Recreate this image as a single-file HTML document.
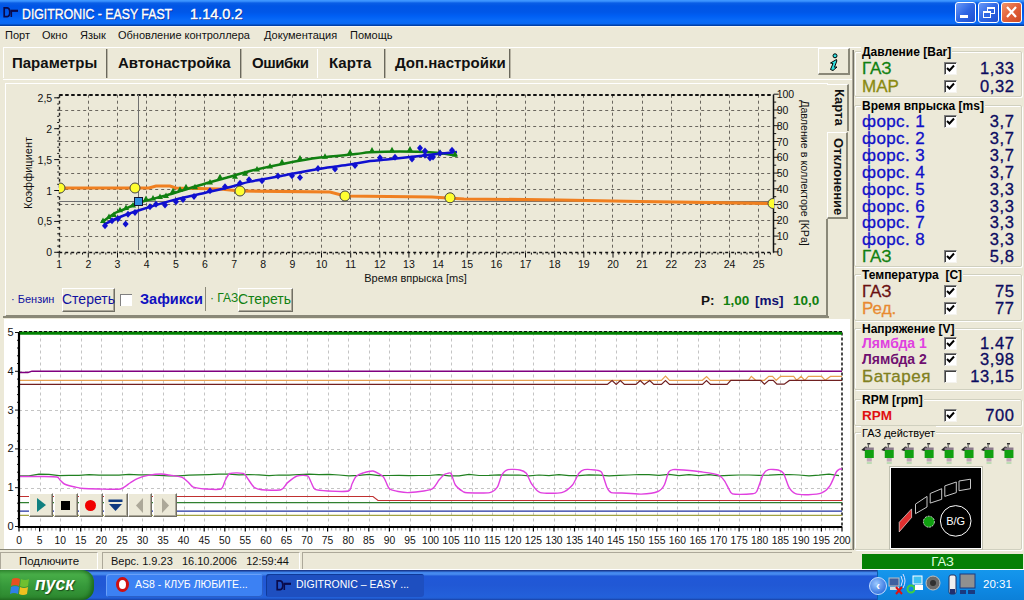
<!DOCTYPE html>
<html><head><meta charset="utf-8">
<style>
* { margin:0; padding:0; box-sizing:border-box; }
html,body { width:1024px; height:600px; overflow:hidden; background:#ece9d8; font-family:"Liberation Sans", sans-serif; position:relative; }
.a { position:absolute; white-space:nowrap; }
</style></head><body>
<div class="a" style="left:0;top:0;width:1024px;height:26px;background:linear-gradient(#3d95ff 0px,#3d95ff 1px,#0a5ee6 3px,#0055e5 6px,#0057e8 12px,#005ff4 16px,#0a6cf8 21px,#0a68f2 24px,#0040a8 25px,#0040a8 26px);"></div>
<div class="a" style="left:0;top:26px;width:1024px;height:1px;background:#f8f8f4"></div>
<svg class="a" style="left:0;top:2px" width="22" height="20"><path d="M4.2,5.8 H7.2 Q9.8,6.2 9.8,10.2 Q9.8,14.2 7.2,14.6 H4.2 Z" fill="none" stroke="#0a0a4a" stroke-width="1.7"/><path d="M11.3,8.5 V15" stroke="#0a0a4a" stroke-width="1.6"/><path d="M10.5,8.8 H18" stroke="#0a0a4a" stroke-width="2.2"/></svg>
<div class="a" style="left:22px;top:5px;font-size:15px;color:#fff;transform:scaleX(0.82);transform-origin:0 0;-webkit-text-stroke:0.4px #fff;text-shadow:1px 1px 0 #0a2a90">DIGITRONIC - EASY FAST</div>
<div class="a" style="left:190px;top:5px;font-size:15px;color:#fff;transform:scaleX(0.97);transform-origin:0 0;-webkit-text-stroke:0.4px #fff;text-shadow:1px 1px 0 #0a2a90">1.14.0.2</div>
<div class="a" style="left:955px;top:2px;width:21px;height:21px;border:1px solid #fff;border-radius:3px;background:linear-gradient(135deg,#6a9af8,#2e66e4 50%,#1e4ed0)"></div>
<div class="a" style="left:960px;top:15px;width:8px;height:3px;background:#fff"></div>
<div class="a" style="left:978px;top:2px;width:21px;height:21px;border:1px solid #fff;border-radius:3px;background:linear-gradient(135deg,#6a9af8,#2e66e4 50%,#1e4ed0)"></div>
<div class="a" style="left:987px;top:7px;width:8px;height:7px;border:1px solid #fff;border-top-width:2px"></div>
<div class="a" style="left:983px;top:11px;width:8px;height:7px;border:1px solid #fff;border-top-width:2px;background:#2e66e4"></div>
<div class="a" style="left:1001px;top:2px;width:21px;height:21px;border:1px solid #fff;border-radius:3px;background:linear-gradient(135deg,#f0946a,#e2603a 50%,#cc4a24)"></div>
<svg class="a" style="left:1001px;top:2px" width="21" height="21"><path d="M6,5 L15,15 M15,5 L6,15" stroke="#fff" stroke-width="2.2"/></svg>
<div class="a" style="left:0;top:25px;width:1024px;height:20px;font-size:11px;color:#111">
<span class="a" style="left:5px;top:4px">Порт</span>
<span class="a" style="left:42px;top:4px">Окно</span>
<span class="a" style="left:80px;top:4px">Язык</span>
<span class="a" style="left:118px;top:4px">Обновление контроллера</span>
<span class="a" style="left:264px;top:4px">Документация</span>
<span class="a" style="left:350px;top:4px">Помощь</span>
</div>
<div class="a" style="left:3px;top:47px;width:1021px;height:1px;background:#fff"></div>
<div class="a" style="left:3px;top:48px;width:1px;height:30px;background:#fff"></div>
<div class="a" style="left:5px;top:48px;width:505px;height:30px;font-size:15px;font-weight:bold;color:#111">
<span class="a" style="left:7px;top:6px">Параметры</span>
<span class="a" style="left:113px;top:6px">Автонастройка</span>
<span class="a" style="left:247px;top:6px;letter-spacing:-0.5px">Ошибки</span>
<span class="a" style="left:324px;top:6px">Карта</span>
<span class="a" style="left:390px;top:6px">Доп.настройки</span>
</div>
<div class="a" style="left:106px;top:49px;width:1px;height:29px;background:#6a685c"></div><div class="a" style="left:107px;top:49px;width:1px;height:29px;background:#b8b4a4"></div>
<div class="a" style="left:240px;top:49px;width:1px;height:29px;background:#6a685c"></div><div class="a" style="left:241px;top:49px;width:1px;height:29px;background:#b8b4a4"></div>
<div class="a" style="left:317px;top:49px;width:1px;height:29px;background:#fff"></div>
<div class="a" style="left:384px;top:49px;width:1px;height:29px;background:#6a685c"></div><div class="a" style="left:385px;top:49px;width:1px;height:29px;background:#b8b4a4"></div>
<div class="a" style="left:509px;top:49px;width:1px;height:29px;background:#6a685c"></div><div class="a" style="left:510px;top:49px;width:1px;height:29px;background:#b8b4a4"></div>
<div class="a" style="left:818px;top:48px;width:32px;height:27px;border-top:1px solid #fff;border-left:1px solid #fff;border-right:2px solid #8a8878;border-bottom:2px solid #8a8878"></div>
<svg class="a" style="left:810px;top:44px" width="46" height="36"><circle cx="25" cy="11.8" r="2" fill="#30e0e0" stroke="#000" stroke-width="1"/><path d="M26.5,15.5 L20.5,19 L23,19.5 L20.5,25.5 L23,26.5 L27,23 L24.5,23.2 L26.8,17 Z" fill="#30e0e0" stroke="#000" stroke-width="1" stroke-linejoin="round"/></svg>
<div class="a" style="left:3px;top:79px;width:850px;height:1px;background:#fff"></div>
<div class="a" style="left:5px;top:83px;width:823px;height:234px;border-left:1px solid #fff;border-top:1px solid #fff;border-bottom:2px solid #8a8878;"></div>
<div class="a" style="left:826px;top:219px;width:2px;height:98px;background:#8a8878"></div>
<svg width="1024" height="600" style="position:absolute;left:0;top:0" font-family="Liberation Sans">
<line x1="59.2" y1="110.5" x2="773.7" y2="110.5" stroke="#6a665e" stroke-width="1" stroke-dasharray="3,3"/>
<line x1="59.2" y1="126.5" x2="773.7" y2="126.5" stroke="#6a665e" stroke-width="1" stroke-dasharray="3,3"/>
<line x1="59.2" y1="141.5" x2="773.7" y2="141.5" stroke="#6a665e" stroke-width="1" stroke-dasharray="3,3"/>
<line x1="59.2" y1="157.5" x2="773.7" y2="157.5" stroke="#6a665e" stroke-width="1" stroke-dasharray="3,3"/>
<line x1="59.2" y1="173.5" x2="773.7" y2="173.5" stroke="#6a665e" stroke-width="1" stroke-dasharray="3,3"/>
<line x1="59.2" y1="189.5" x2="773.7" y2="189.5" stroke="#6a665e" stroke-width="1" stroke-dasharray="3,3"/>
<line x1="59.2" y1="204.5" x2="773.7" y2="204.5" stroke="#6a665e" stroke-width="1" stroke-dasharray="3,3"/>
<line x1="59.2" y1="220.5" x2="773.7" y2="220.5" stroke="#6a665e" stroke-width="1" stroke-dasharray="3,3"/>
<line x1="59.2" y1="236.5" x2="773.7" y2="236.5" stroke="#6a665e" stroke-width="1" stroke-dasharray="3,3"/>
<line x1="88.5" y1="94.7" x2="88.5" y2="252.6" stroke="#6a665e" stroke-width="1" stroke-dasharray="3,3"/>
<line x1="117.5" y1="94.7" x2="117.5" y2="252.6" stroke="#6a665e" stroke-width="1" stroke-dasharray="3,3"/>
<line x1="146.5" y1="94.7" x2="146.5" y2="252.6" stroke="#6a665e" stroke-width="1" stroke-dasharray="3,3"/>
<line x1="175.5" y1="94.7" x2="175.5" y2="252.6" stroke="#6a665e" stroke-width="1" stroke-dasharray="3,3"/>
<line x1="204.5" y1="94.7" x2="204.5" y2="252.6" stroke="#6a665e" stroke-width="1" stroke-dasharray="3,3"/>
<line x1="234.5" y1="94.7" x2="234.5" y2="252.6" stroke="#6a665e" stroke-width="1" stroke-dasharray="3,3"/>
<line x1="263.5" y1="94.7" x2="263.5" y2="252.6" stroke="#6a665e" stroke-width="1" stroke-dasharray="3,3"/>
<line x1="292.5" y1="94.7" x2="292.5" y2="252.6" stroke="#6a665e" stroke-width="1" stroke-dasharray="3,3"/>
<line x1="321.5" y1="94.7" x2="321.5" y2="252.6" stroke="#6a665e" stroke-width="1" stroke-dasharray="3,3"/>
<line x1="350.5" y1="94.7" x2="350.5" y2="252.6" stroke="#6a665e" stroke-width="1" stroke-dasharray="3,3"/>
<line x1="379.5" y1="94.7" x2="379.5" y2="252.6" stroke="#6a665e" stroke-width="1" stroke-dasharray="3,3"/>
<line x1="408.5" y1="94.7" x2="408.5" y2="252.6" stroke="#6a665e" stroke-width="1" stroke-dasharray="3,3"/>
<line x1="438.5" y1="94.7" x2="438.5" y2="252.6" stroke="#6a665e" stroke-width="1" stroke-dasharray="3,3"/>
<line x1="467.5" y1="94.7" x2="467.5" y2="252.6" stroke="#6a665e" stroke-width="1" stroke-dasharray="3,3"/>
<line x1="496.5" y1="94.7" x2="496.5" y2="252.6" stroke="#6a665e" stroke-width="1" stroke-dasharray="3,3"/>
<line x1="525.5" y1="94.7" x2="525.5" y2="252.6" stroke="#6a665e" stroke-width="1" stroke-dasharray="3,3"/>
<line x1="554.5" y1="94.7" x2="554.5" y2="252.6" stroke="#6a665e" stroke-width="1" stroke-dasharray="3,3"/>
<line x1="583.5" y1="94.7" x2="583.5" y2="252.6" stroke="#6a665e" stroke-width="1" stroke-dasharray="3,3"/>
<line x1="612.5" y1="94.7" x2="612.5" y2="252.6" stroke="#6a665e" stroke-width="1" stroke-dasharray="3,3"/>
<line x1="642.5" y1="94.7" x2="642.5" y2="252.6" stroke="#6a665e" stroke-width="1" stroke-dasharray="3,3"/>
<line x1="671.5" y1="94.7" x2="671.5" y2="252.6" stroke="#6a665e" stroke-width="1" stroke-dasharray="3,3"/>
<line x1="700.5" y1="94.7" x2="700.5" y2="252.6" stroke="#6a665e" stroke-width="1" stroke-dasharray="3,3"/>
<line x1="729.5" y1="94.7" x2="729.5" y2="252.6" stroke="#6a665e" stroke-width="1" stroke-dasharray="3,3"/>
<line x1="758.5" y1="94.7" x2="758.5" y2="252.6" stroke="#6a665e" stroke-width="1" stroke-dasharray="3,3"/>
<line x1="59.2" y1="95" x2="773.7" y2="95" stroke="#111" stroke-width="1.8" stroke-dasharray="3.5,2.5"/>
<line x1="59.5" y1="94.7" x2="59.5" y2="252.6" stroke="#222" stroke-width="1.4" stroke-dasharray="3,3"/>
<line x1="773.5" y1="94.7" x2="773.5" y2="252.6" stroke="#111" stroke-width="1.5"/>
<line x1="59.2" y1="252.5" x2="773.7" y2="252.5" stroke="#111" stroke-width="1.5" stroke-dasharray="3,3"/>
<line x1="54.2" y1="252.3" x2="59.2" y2="252.3" stroke="#111"/>
<text x="52.2" y="256.3" text-anchor="end" font-size="10.5" fill="#111">0</text>
<line x1="54.2" y1="221.4" x2="59.2" y2="221.4" stroke="#111"/>
<text x="52.2" y="225.4" text-anchor="end" font-size="10.5" fill="#111">0,5</text>
<line x1="54.2" y1="190.5" x2="59.2" y2="190.5" stroke="#111"/>
<text x="52.2" y="194.5" text-anchor="end" font-size="10.5" fill="#111">1</text>
<line x1="54.2" y1="159.6" x2="59.2" y2="159.6" stroke="#111"/>
<text x="52.2" y="163.6" text-anchor="end" font-size="10.5" fill="#111">1,5</text>
<line x1="54.2" y1="128.7" x2="59.2" y2="128.7" stroke="#111"/>
<text x="52.2" y="132.7" text-anchor="end" font-size="10.5" fill="#111">2</text>
<line x1="54.2" y1="97.8" x2="59.2" y2="97.8" stroke="#111"/>
<text x="52.2" y="101.8" text-anchor="end" font-size="10.5" fill="#111">2,5</text>
<line x1="57.2" y1="252.3" x2="59.2" y2="252.3" stroke="#111"/>
<line x1="57.2" y1="246.1" x2="59.2" y2="246.1" stroke="#111"/>
<line x1="57.2" y1="239.9" x2="59.2" y2="239.9" stroke="#111"/>
<line x1="57.2" y1="233.8" x2="59.2" y2="233.8" stroke="#111"/>
<line x1="57.2" y1="227.6" x2="59.2" y2="227.6" stroke="#111"/>
<line x1="57.2" y1="221.4" x2="59.2" y2="221.4" stroke="#111"/>
<line x1="57.2" y1="215.2" x2="59.2" y2="215.2" stroke="#111"/>
<line x1="57.2" y1="209.0" x2="59.2" y2="209.0" stroke="#111"/>
<line x1="57.2" y1="202.9" x2="59.2" y2="202.9" stroke="#111"/>
<line x1="57.2" y1="196.7" x2="59.2" y2="196.7" stroke="#111"/>
<line x1="57.2" y1="190.5" x2="59.2" y2="190.5" stroke="#111"/>
<line x1="57.2" y1="184.3" x2="59.2" y2="184.3" stroke="#111"/>
<line x1="57.2" y1="178.1" x2="59.2" y2="178.1" stroke="#111"/>
<line x1="57.2" y1="172.0" x2="59.2" y2="172.0" stroke="#111"/>
<line x1="57.2" y1="165.8" x2="59.2" y2="165.8" stroke="#111"/>
<line x1="57.2" y1="159.6" x2="59.2" y2="159.6" stroke="#111"/>
<line x1="57.2" y1="153.4" x2="59.2" y2="153.4" stroke="#111"/>
<line x1="57.2" y1="147.2" x2="59.2" y2="147.2" stroke="#111"/>
<line x1="57.2" y1="141.1" x2="59.2" y2="141.1" stroke="#111"/>
<line x1="57.2" y1="134.9" x2="59.2" y2="134.9" stroke="#111"/>
<line x1="57.2" y1="128.7" x2="59.2" y2="128.7" stroke="#111"/>
<line x1="57.2" y1="122.5" x2="59.2" y2="122.5" stroke="#111"/>
<line x1="57.2" y1="116.3" x2="59.2" y2="116.3" stroke="#111"/>
<line x1="57.2" y1="110.2" x2="59.2" y2="110.2" stroke="#111"/>
<line x1="57.2" y1="104.0" x2="59.2" y2="104.0" stroke="#111"/>
<line x1="57.2" y1="97.8" x2="59.2" y2="97.8" stroke="#111"/>
<line x1="59.2" y1="252.6" x2="59.2" y2="257.6" stroke="#111"/>
<text x="59.2" y="267.6" text-anchor="middle" font-size="10.5" fill="#111">1</text>
<line x1="65.0" y1="252.6" x2="65.0" y2="254.6" stroke="#111"/>
<line x1="70.9" y1="252.6" x2="70.9" y2="254.6" stroke="#111"/>
<line x1="76.7" y1="252.6" x2="76.7" y2="254.6" stroke="#111"/>
<line x1="82.5" y1="252.6" x2="82.5" y2="254.6" stroke="#111"/>
<line x1="88.3" y1="252.6" x2="88.3" y2="257.6" stroke="#111"/>
<text x="88.3" y="267.6" text-anchor="middle" font-size="10.5" fill="#111">2</text>
<line x1="94.2" y1="252.6" x2="94.2" y2="254.6" stroke="#111"/>
<line x1="100.0" y1="252.6" x2="100.0" y2="254.6" stroke="#111"/>
<line x1="105.8" y1="252.6" x2="105.8" y2="254.6" stroke="#111"/>
<line x1="111.7" y1="252.6" x2="111.7" y2="254.6" stroke="#111"/>
<line x1="117.5" y1="252.6" x2="117.5" y2="257.6" stroke="#111"/>
<text x="117.5" y="267.6" text-anchor="middle" font-size="10.5" fill="#111">3</text>
<line x1="123.3" y1="252.6" x2="123.3" y2="254.6" stroke="#111"/>
<line x1="129.2" y1="252.6" x2="129.2" y2="254.6" stroke="#111"/>
<line x1="135.0" y1="252.6" x2="135.0" y2="254.6" stroke="#111"/>
<line x1="140.8" y1="252.6" x2="140.8" y2="254.6" stroke="#111"/>
<line x1="146.6" y1="252.6" x2="146.6" y2="257.6" stroke="#111"/>
<text x="146.6" y="267.6" text-anchor="middle" font-size="10.5" fill="#111">4</text>
<line x1="152.5" y1="252.6" x2="152.5" y2="254.6" stroke="#111"/>
<line x1="158.3" y1="252.6" x2="158.3" y2="254.6" stroke="#111"/>
<line x1="164.1" y1="252.6" x2="164.1" y2="254.6" stroke="#111"/>
<line x1="170.0" y1="252.6" x2="170.0" y2="254.6" stroke="#111"/>
<line x1="175.8" y1="252.6" x2="175.8" y2="257.6" stroke="#111"/>
<text x="175.8" y="267.6" text-anchor="middle" font-size="10.5" fill="#111">5</text>
<line x1="181.6" y1="252.6" x2="181.6" y2="254.6" stroke="#111"/>
<line x1="187.4" y1="252.6" x2="187.4" y2="254.6" stroke="#111"/>
<line x1="193.3" y1="252.6" x2="193.3" y2="254.6" stroke="#111"/>
<line x1="199.1" y1="252.6" x2="199.1" y2="254.6" stroke="#111"/>
<line x1="204.9" y1="252.6" x2="204.9" y2="257.6" stroke="#111"/>
<text x="204.9" y="267.6" text-anchor="middle" font-size="10.5" fill="#111">6</text>
<line x1="210.8" y1="252.6" x2="210.8" y2="254.6" stroke="#111"/>
<line x1="216.6" y1="252.6" x2="216.6" y2="254.6" stroke="#111"/>
<line x1="222.4" y1="252.6" x2="222.4" y2="254.6" stroke="#111"/>
<line x1="228.2" y1="252.6" x2="228.2" y2="254.6" stroke="#111"/>
<line x1="234.1" y1="252.6" x2="234.1" y2="257.6" stroke="#111"/>
<text x="234.1" y="267.6" text-anchor="middle" font-size="10.5" fill="#111">7</text>
<line x1="239.9" y1="252.6" x2="239.9" y2="254.6" stroke="#111"/>
<line x1="245.7" y1="252.6" x2="245.7" y2="254.6" stroke="#111"/>
<line x1="251.6" y1="252.6" x2="251.6" y2="254.6" stroke="#111"/>
<line x1="257.4" y1="252.6" x2="257.4" y2="254.6" stroke="#111"/>
<line x1="263.2" y1="252.6" x2="263.2" y2="257.6" stroke="#111"/>
<text x="263.2" y="267.6" text-anchor="middle" font-size="10.5" fill="#111">8</text>
<line x1="269.0" y1="252.6" x2="269.0" y2="254.6" stroke="#111"/>
<line x1="274.9" y1="252.6" x2="274.9" y2="254.6" stroke="#111"/>
<line x1="280.7" y1="252.6" x2="280.7" y2="254.6" stroke="#111"/>
<line x1="286.5" y1="252.6" x2="286.5" y2="254.6" stroke="#111"/>
<line x1="292.4" y1="252.6" x2="292.4" y2="257.6" stroke="#111"/>
<text x="292.4" y="267.6" text-anchor="middle" font-size="10.5" fill="#111">9</text>
<line x1="298.2" y1="252.6" x2="298.2" y2="254.6" stroke="#111"/>
<line x1="304.0" y1="252.6" x2="304.0" y2="254.6" stroke="#111"/>
<line x1="309.9" y1="252.6" x2="309.9" y2="254.6" stroke="#111"/>
<line x1="315.7" y1="252.6" x2="315.7" y2="254.6" stroke="#111"/>
<line x1="321.5" y1="252.6" x2="321.5" y2="257.6" stroke="#111"/>
<text x="321.5" y="267.6" text-anchor="middle" font-size="10.5" fill="#111">10</text>
<line x1="327.3" y1="252.6" x2="327.3" y2="254.6" stroke="#111"/>
<line x1="333.2" y1="252.6" x2="333.2" y2="254.6" stroke="#111"/>
<line x1="339.0" y1="252.6" x2="339.0" y2="254.6" stroke="#111"/>
<line x1="344.8" y1="252.6" x2="344.8" y2="254.6" stroke="#111"/>
<line x1="350.7" y1="252.6" x2="350.7" y2="257.6" stroke="#111"/>
<text x="350.7" y="267.6" text-anchor="middle" font-size="10.5" fill="#111">11</text>
<line x1="356.5" y1="252.6" x2="356.5" y2="254.6" stroke="#111"/>
<line x1="362.3" y1="252.6" x2="362.3" y2="254.6" stroke="#111"/>
<line x1="368.1" y1="252.6" x2="368.1" y2="254.6" stroke="#111"/>
<line x1="374.0" y1="252.6" x2="374.0" y2="254.6" stroke="#111"/>
<line x1="379.8" y1="252.6" x2="379.8" y2="257.6" stroke="#111"/>
<text x="379.8" y="267.6" text-anchor="middle" font-size="10.5" fill="#111">12</text>
<line x1="385.6" y1="252.6" x2="385.6" y2="254.6" stroke="#111"/>
<line x1="391.5" y1="252.6" x2="391.5" y2="254.6" stroke="#111"/>
<line x1="397.3" y1="252.6" x2="397.3" y2="254.6" stroke="#111"/>
<line x1="403.1" y1="252.6" x2="403.1" y2="254.6" stroke="#111"/>
<line x1="408.9" y1="252.6" x2="408.9" y2="257.6" stroke="#111"/>
<text x="408.9" y="267.6" text-anchor="middle" font-size="10.5" fill="#111">13</text>
<line x1="414.8" y1="252.6" x2="414.8" y2="254.6" stroke="#111"/>
<line x1="420.6" y1="252.6" x2="420.6" y2="254.6" stroke="#111"/>
<line x1="426.4" y1="252.6" x2="426.4" y2="254.6" stroke="#111"/>
<line x1="432.3" y1="252.6" x2="432.3" y2="254.6" stroke="#111"/>
<line x1="438.1" y1="252.6" x2="438.1" y2="257.6" stroke="#111"/>
<text x="438.1" y="267.6" text-anchor="middle" font-size="10.5" fill="#111">14</text>
<line x1="443.9" y1="252.6" x2="443.9" y2="254.6" stroke="#111"/>
<line x1="449.8" y1="252.6" x2="449.8" y2="254.6" stroke="#111"/>
<line x1="455.6" y1="252.6" x2="455.6" y2="254.6" stroke="#111"/>
<line x1="461.4" y1="252.6" x2="461.4" y2="254.6" stroke="#111"/>
<line x1="467.2" y1="252.6" x2="467.2" y2="257.6" stroke="#111"/>
<text x="467.2" y="267.6" text-anchor="middle" font-size="10.5" fill="#111">15</text>
<line x1="473.1" y1="252.6" x2="473.1" y2="254.6" stroke="#111"/>
<line x1="478.9" y1="252.6" x2="478.9" y2="254.6" stroke="#111"/>
<line x1="484.7" y1="252.6" x2="484.7" y2="254.6" stroke="#111"/>
<line x1="490.6" y1="252.6" x2="490.6" y2="254.6" stroke="#111"/>
<line x1="496.4" y1="252.6" x2="496.4" y2="257.6" stroke="#111"/>
<text x="496.4" y="267.6" text-anchor="middle" font-size="10.5" fill="#111">16</text>
<line x1="502.2" y1="252.6" x2="502.2" y2="254.6" stroke="#111"/>
<line x1="508.0" y1="252.6" x2="508.0" y2="254.6" stroke="#111"/>
<line x1="513.9" y1="252.6" x2="513.9" y2="254.6" stroke="#111"/>
<line x1="519.7" y1="252.6" x2="519.7" y2="254.6" stroke="#111"/>
<line x1="525.5" y1="252.6" x2="525.5" y2="257.6" stroke="#111"/>
<text x="525.5" y="267.6" text-anchor="middle" font-size="10.5" fill="#111">17</text>
<line x1="531.4" y1="252.6" x2="531.4" y2="254.6" stroke="#111"/>
<line x1="537.2" y1="252.6" x2="537.2" y2="254.6" stroke="#111"/>
<line x1="543.0" y1="252.6" x2="543.0" y2="254.6" stroke="#111"/>
<line x1="548.9" y1="252.6" x2="548.9" y2="254.6" stroke="#111"/>
<line x1="554.7" y1="252.6" x2="554.7" y2="257.6" stroke="#111"/>
<text x="554.7" y="267.6" text-anchor="middle" font-size="10.5" fill="#111">18</text>
<line x1="560.5" y1="252.6" x2="560.5" y2="254.6" stroke="#111"/>
<line x1="566.3" y1="252.6" x2="566.3" y2="254.6" stroke="#111"/>
<line x1="572.2" y1="252.6" x2="572.2" y2="254.6" stroke="#111"/>
<line x1="578.0" y1="252.6" x2="578.0" y2="254.6" stroke="#111"/>
<line x1="583.8" y1="252.6" x2="583.8" y2="257.6" stroke="#111"/>
<text x="583.8" y="267.6" text-anchor="middle" font-size="10.5" fill="#111">19</text>
<line x1="589.7" y1="252.6" x2="589.7" y2="254.6" stroke="#111"/>
<line x1="595.5" y1="252.6" x2="595.5" y2="254.6" stroke="#111"/>
<line x1="601.3" y1="252.6" x2="601.3" y2="254.6" stroke="#111"/>
<line x1="607.1" y1="252.6" x2="607.1" y2="254.6" stroke="#111"/>
<line x1="613.0" y1="252.6" x2="613.0" y2="257.6" stroke="#111"/>
<text x="613.0" y="267.6" text-anchor="middle" font-size="10.5" fill="#111">20</text>
<line x1="618.8" y1="252.6" x2="618.8" y2="254.6" stroke="#111"/>
<line x1="624.6" y1="252.6" x2="624.6" y2="254.6" stroke="#111"/>
<line x1="630.5" y1="252.6" x2="630.5" y2="254.6" stroke="#111"/>
<line x1="636.3" y1="252.6" x2="636.3" y2="254.6" stroke="#111"/>
<line x1="642.1" y1="252.6" x2="642.1" y2="257.6" stroke="#111"/>
<text x="642.1" y="267.6" text-anchor="middle" font-size="10.5" fill="#111">21</text>
<line x1="647.9" y1="252.6" x2="647.9" y2="254.6" stroke="#111"/>
<line x1="653.8" y1="252.6" x2="653.8" y2="254.6" stroke="#111"/>
<line x1="659.6" y1="252.6" x2="659.6" y2="254.6" stroke="#111"/>
<line x1="665.4" y1="252.6" x2="665.4" y2="254.6" stroke="#111"/>
<line x1="671.3" y1="252.6" x2="671.3" y2="257.6" stroke="#111"/>
<text x="671.3" y="267.6" text-anchor="middle" font-size="10.5" fill="#111">22</text>
<line x1="677.1" y1="252.6" x2="677.1" y2="254.6" stroke="#111"/>
<line x1="682.9" y1="252.6" x2="682.9" y2="254.6" stroke="#111"/>
<line x1="688.8" y1="252.6" x2="688.8" y2="254.6" stroke="#111"/>
<line x1="694.6" y1="252.6" x2="694.6" y2="254.6" stroke="#111"/>
<line x1="700.4" y1="252.6" x2="700.4" y2="257.6" stroke="#111"/>
<text x="700.4" y="267.6" text-anchor="middle" font-size="10.5" fill="#111">23</text>
<line x1="706.2" y1="252.6" x2="706.2" y2="254.6" stroke="#111"/>
<line x1="712.1" y1="252.6" x2="712.1" y2="254.6" stroke="#111"/>
<line x1="717.9" y1="252.6" x2="717.9" y2="254.6" stroke="#111"/>
<line x1="723.7" y1="252.6" x2="723.7" y2="254.6" stroke="#111"/>
<line x1="729.6" y1="252.6" x2="729.6" y2="257.6" stroke="#111"/>
<text x="729.6" y="267.6" text-anchor="middle" font-size="10.5" fill="#111">24</text>
<line x1="735.4" y1="252.6" x2="735.4" y2="254.6" stroke="#111"/>
<line x1="741.2" y1="252.6" x2="741.2" y2="254.6" stroke="#111"/>
<line x1="747.0" y1="252.6" x2="747.0" y2="254.6" stroke="#111"/>
<line x1="752.9" y1="252.6" x2="752.9" y2="254.6" stroke="#111"/>
<line x1="758.7" y1="252.6" x2="758.7" y2="257.6" stroke="#111"/>
<text x="758.7" y="267.6" text-anchor="middle" font-size="10.5" fill="#111">25</text>
<line x1="764.5" y1="252.6" x2="764.5" y2="254.6" stroke="#111"/>
<line x1="770.4" y1="252.6" x2="770.4" y2="254.6" stroke="#111"/>
<line x1="773.7" y1="251.9" x2="778.7" y2="251.9" stroke="#111"/>
<text x="776.7" y="255.9" font-size="10.5" fill="#111">0</text>
<line x1="773.7" y1="244.0" x2="776.2" y2="244.0" stroke="#111"/>
<line x1="773.7" y1="236.1" x2="778.7" y2="236.1" stroke="#111"/>
<text x="776.7" y="240.1" font-size="10.5" fill="#111">10</text>
<line x1="773.7" y1="228.2" x2="776.2" y2="228.2" stroke="#111"/>
<line x1="773.7" y1="220.4" x2="778.7" y2="220.4" stroke="#111"/>
<text x="776.7" y="224.4" font-size="10.5" fill="#111">20</text>
<line x1="773.7" y1="212.5" x2="776.2" y2="212.5" stroke="#111"/>
<line x1="773.7" y1="204.6" x2="778.7" y2="204.6" stroke="#111"/>
<text x="776.7" y="208.6" font-size="10.5" fill="#111">30</text>
<line x1="773.7" y1="196.7" x2="776.2" y2="196.7" stroke="#111"/>
<line x1="773.7" y1="188.8" x2="778.7" y2="188.8" stroke="#111"/>
<text x="776.7" y="192.8" font-size="10.5" fill="#111">40</text>
<line x1="773.7" y1="180.9" x2="776.2" y2="180.9" stroke="#111"/>
<line x1="773.7" y1="173.1" x2="778.7" y2="173.1" stroke="#111"/>
<text x="776.7" y="177.1" font-size="10.5" fill="#111">50</text>
<line x1="773.7" y1="165.2" x2="776.2" y2="165.2" stroke="#111"/>
<line x1="773.7" y1="157.3" x2="778.7" y2="157.3" stroke="#111"/>
<text x="776.7" y="161.3" font-size="10.5" fill="#111">60</text>
<line x1="773.7" y1="149.4" x2="776.2" y2="149.4" stroke="#111"/>
<line x1="773.7" y1="141.5" x2="778.7" y2="141.5" stroke="#111"/>
<text x="776.7" y="145.5" font-size="10.5" fill="#111">70</text>
<line x1="773.7" y1="133.6" x2="776.2" y2="133.6" stroke="#111"/>
<line x1="773.7" y1="125.7" x2="778.7" y2="125.7" stroke="#111"/>
<text x="776.7" y="129.7" font-size="10.5" fill="#111">80</text>
<line x1="773.7" y1="117.9" x2="776.2" y2="117.9" stroke="#111"/>
<line x1="773.7" y1="110.0" x2="778.7" y2="110.0" stroke="#111"/>
<text x="776.7" y="114.0" font-size="10.5" fill="#111">90</text>
<line x1="773.7" y1="102.1" x2="776.2" y2="102.1" stroke="#111"/>
<line x1="773.7" y1="94.2" x2="778.7" y2="94.2" stroke="#111"/>
<text x="776.7" y="98.2" font-size="10.5" fill="#111">100</text>
<text x="415.5" y="282" text-anchor="middle" font-size="11" fill="#111">Время впрыска [ms]</text>
<text transform="translate(32,173) rotate(-90)" text-anchor="middle" font-size="11" fill="#111">Коэффициент</text>
<text transform="translate(800.5,173) rotate(90)" text-anchor="middle" font-size="10.7" fill="#111">Давление в коллекторе [KPa]</text>
<line x1="138.5" y1="94.7" x2="138.5" y2="250" stroke="#707070" stroke-width="1"/>
<line x1="59.2" y1="201.5" x2="773.7" y2="201.5" stroke="#707070" stroke-width="1"/>
<polyline fill="none" stroke="#f08020" stroke-width="3.2"  points="59.0,188.0 149.0,188.0 156.0,186.0 170.0,186.0 176.0,188.0 220.0,189.0 240.0,191.0 330.0,192.0 345.0,196.0 432.0,197.0 464.0,199.0 560.0,200.0 640.0,201.5 772.0,203.5"/>
<path fill="none" stroke="#108010" stroke-width="2.5" d="M103.0,221.6 C105.0,220.2 111.3,215.1 115.0,213.0 C118.7,210.9 120.8,210.8 125.0,209.0 C129.2,207.2 132.7,204.9 140.0,202.5 C147.3,200.1 159.2,197.3 169.0,194.5 C178.8,191.7 188.8,188.4 198.6,185.5 C208.4,182.6 219.4,179.7 228.0,177.3 C236.6,174.9 240.5,173.3 250.0,171.0 C259.5,168.7 273.3,165.6 285.0,163.4 C296.7,161.2 308.2,159.2 320.0,157.6 C331.8,156.0 347.2,155.0 355.5,154.1 C363.8,153.2 362.6,152.7 370.0,152.3 C377.4,151.9 389.5,151.5 400.0,151.5 C410.5,151.5 423.5,151.8 433.0,152.5 C442.5,153.2 453.0,155.1 457.0,155.6"/>
<path fill="none" stroke="#1010d0" stroke-width="2.5" d="M104.0,224.5 C106.7,223.2 114.0,219.4 120.0,217.0 C126.0,214.6 130.8,212.9 140.0,210.0 C149.2,207.1 164.2,202.4 175.0,199.6 C185.8,196.8 194.7,195.3 204.5,193.0 C214.3,190.7 226.4,187.9 234.0,186.0 C241.6,184.1 241.5,183.4 250.0,181.6 C258.5,179.8 273.3,177.3 285.0,175.2 C296.7,173.0 309.2,170.5 320.0,168.7 C330.8,166.9 341.7,165.9 350.0,164.6 C358.3,163.3 363.8,161.9 370.0,161.1 C376.2,160.2 378.7,160.3 387.0,159.5 C395.3,158.7 408.3,157.3 420.0,156.0 C431.7,154.7 450.8,152.6 457.0,151.9"/>
<polygon points="100,222.90951821403928 103,217.40951821403928 106,222.90951821403928" fill="#108010"/>
<polygon points="106,219.039089544322 109,213.539089544322 112,219.039089544322" fill="#108010"/>
<polygon points="111,216.9135090027616 114,211.4135090027616 117,216.9135090027616" fill="#108010"/>
<polygon points="117,212.3626002803991 120,206.8626002803991 123,212.3626002803991" fill="#108010"/>
<polygon points="123,210.09803175891574 126,204.59803175891574 129,210.09803175891574" fill="#108010"/>
<polygon points="130,207.38287264873293 133,201.88287264873293 136,207.38287264873293" fill="#108010"/>
<polygon points="143,201.0834689616264 146,195.5834689616264 149,201.0834689616264" fill="#108010"/>
<polygon points="150,200.4614276596155 153,194.9614276596155 156,200.4614276596155" fill="#108010"/>
<polygon points="157,199.00228950155685 160,193.50228950155685 163,199.00228950155685" fill="#108010"/>
<polygon points="163,197.99949369697634 166,192.49949369697634 169,197.99949369697634" fill="#108010"/>
<polygon points="170,193.16027760870065 173,187.66027760870065 176,193.16027760870065" fill="#108010"/>
<polygon points="177,191.86901045590352 180,186.36901045590352 183,191.86901045590352" fill="#108010"/>
<polygon points="183,189.19376323104842 186,183.69376323104842 189,189.19376323104842" fill="#108010"/>
<polygon points="192,189.3331727320633 195,183.8331727320633 198,189.3331727320633" fill="#108010"/>
<polygon points="207,184.59416209343027 210,179.09416209343027 213,184.59416209343027" fill="#108010"/>
<polygon points="217,179.1988138624862 220,173.6988138624862 223,179.1988138624862" fill="#108010"/>
<polygon points="232,178.72422822864968 235,173.22422822864968 238,178.72422822864968" fill="#108010"/>
<polygon points="242,175.79084930632047 245,170.29084930632047 248,175.79084930632047" fill="#108010"/>
<polygon points="254,171.59569013413534 257,166.09569013413534 260,171.59569013413534" fill="#108010"/>
<polygon points="267,168.61939367545716 270,163.11939367545716 273,168.61939367545716" fill="#108010"/>
<polygon points="279,164.18140495198924 282,158.68140495198924 285,164.18140495198924" fill="#108010"/>
<polygon points="297,160.47428866208412 300,154.97428866208412 303,160.47428866208412" fill="#108010"/>
<polygon points="322,158.72056731820302 325,153.22056731820302 328,158.72056731820302" fill="#108010"/>
<polygon points="347,154.38045794180218 350,148.88045794180218 353,154.38045794180218" fill="#108010"/>
<polygon points="369,152.5074997178584 372,147.0074997178584 375,152.5074997178584" fill="#108010"/>
<polygon points="389,152.1811053879942 392,146.6811053879942 395,152.1811053879942" fill="#108010"/>
<polygon points="407,151.42336065992947 410,145.92336065992947 413,151.42336065992947" fill="#108010"/>
<polygon points="437,154.7599045115598 440,149.2599045115598 443,154.7599045115598" fill="#108010"/>
<polygon points="452,156.6037911332933 455,151.1037911332933 458,156.6037911332933" fill="#108010"/>
<polygon points="102,225.74338564259267 105,222.24338564259267 108,225.74338564259267 105,229.24338564259267" fill="#1010d0"/>
<polygon points="109,220.84562057382038 112,217.34562057382038 115,220.84562057382038 112,224.34562057382038" fill="#1010d0"/>
<polygon points="115,218.63895853959588 118,215.13895853959588 121,218.63895853959588 118,222.13895853959588" fill="#1010d0"/>
<polygon points="125,214.19886576103394 128,210.69886576103394 131,214.19886576103394 128,217.69886576103394" fill="#1010d0"/>
<polygon points="132,212.56224765945183 135,209.06224765945183 138,212.56224765945183 135,216.06224765945183" fill="#1010d0"/>
<polygon points="147,206.81522083656924 150,203.31522083656924 153,206.81522083656924 150,210.31522083656924" fill="#1010d0"/>
<polygon points="153,204.13652878403371 156,200.63652878403371 159,204.13652878403371 156,207.63652878403371" fill="#1010d0"/>
<polygon points="162,205.059709573744 165,201.559709573744 168,205.059709573744 165,208.559709573744" fill="#1010d0"/>
<polygon points="173,201.85472939472166 176,198.35472939472166 179,201.85472939472166 176,205.35472939472166" fill="#1010d0"/>
<polygon points="180,199.5112472389897 183,196.0112472389897 186,199.5112472389897 183,203.0112472389897" fill="#1010d0"/>
<polygon points="191,196.38820064986263 194,192.88820064986263 197,196.38820064986263 194,199.88820064986263" fill="#1010d0"/>
<polygon points="207,190.77130133931504 210,187.27130133931504 213,190.77130133931504 210,194.27130133931504" fill="#1010d0"/>
<polygon points="222,186.7839227283785 225,183.2839227283785 228,186.7839227283785 225,190.2839227283785" fill="#1010d0"/>
<polygon points="237,183.295199736571 240,179.795199736571 243,183.295199736571 240,186.795199736571" fill="#1010d0"/>
<polygon points="246,179.72611749779963 249,176.22611749779963 252,179.72611749779963 249,183.22611749779963" fill="#1010d0"/>
<polygon points="259,180.73715371776632 262,177.23715371776632 265,180.73715371776632 262,184.23715371776632" fill="#1010d0"/>
<polygon points="275,175.98199902459245 278,172.48199902459245 281,175.98199902459245 278,179.48199902459245" fill="#1010d0"/>
<polygon points="289,175.63291810940586 292,172.13291810940586 295,175.63291810940586 292,179.13291810940586" fill="#1010d0"/>
<polygon points="315,168.50399622995823 318,165.00399622995823 321,168.50399622995823 318,172.00399622995823" fill="#1010d0"/>
<polygon points="332,168.94021191659905 335,165.44021191659905 338,168.94021191659905 335,172.44021191659905" fill="#1010d0"/>
<polygon points="352,165.46154886651402 355,161.96154886651402 358,165.46154886651402 355,168.96154886651402" fill="#1010d0"/>
<polygon points="377,157.66154821468962 380,154.16154821468962 383,157.66154821468962 380,161.16154821468962" fill="#1010d0"/>
<polygon points="392,157.20010222516322 395,153.70010222516322 398,157.20010222516322 395,160.70010222516322" fill="#1010d0"/>
<polygon points="409,158.89984448900574 412,155.39984448900574 415,158.89984448900574 412,162.39984448900574" fill="#1010d0"/>
<polygon points="422,155.29588232601427 425,151.79588232601427 428,155.29588232601427 425,158.79588232601427" fill="#1010d0"/>
<polygon points="430,156.96125416533093 433,153.46125416533093 436,156.96125416533093 433,160.46125416533093" fill="#1010d0"/>
<polygon points="437,153.27090572418018 440,149.77090572418018 443,153.27090572418018 440,156.77090572418018" fill="#1010d0"/>
<polygon points="449,150.31924577322255 452,146.81924577322255 455,150.31924577322255 452,153.81924577322255" fill="#1010d0"/>
<polygon points="122.6,224 125.6,220.5 128.6,224 125.6,227.5" fill="#1010d0"/>
<polygon points="297,177.6 300,174.1 303,177.6 300,181.1" fill="#1010d0"/>
<polygon points="417,148 420,144.5 423,148 420,151.5" fill="#1010d0"/>
<polygon points="427,158 430,154.5 433,158 430,161.5" fill="#1010d0"/>
<polygon points="422,151 425,147.5 428,151 425,154.5" fill="#1010d0"/>
<defs><clipPath id="pc"><rect x="59" y="90" width="715" height="170"/></clipPath></defs>
<circle cx="60" cy="188" r="5" fill="#ffff30" stroke="#444" stroke-width="1" clip-path="url(#pc)"/>
<circle cx="135" cy="188" r="5" fill="#ffff30" stroke="#444" stroke-width="1" clip-path="url(#pc)"/>
<circle cx="240" cy="191" r="5" fill="#ffff30" stroke="#444" stroke-width="1" clip-path="url(#pc)"/>
<circle cx="345" cy="196" r="5" fill="#ffff30" stroke="#444" stroke-width="1" clip-path="url(#pc)"/>
<circle cx="450" cy="197.8" r="5" fill="#ffff30" stroke="#444" stroke-width="1" clip-path="url(#pc)"/>
<circle cx="773" cy="203.5" r="5" fill="#ffff30" stroke="#444" stroke-width="1" clip-path="url(#pc)"/>
<rect x="134.5" y="197.5" width="8" height="8" fill="#3090e0" stroke="#113"/>
</svg>
<div class="a" style="left:11px;top:293px;font-size:11px;color:#1010a0">· Бензин</div>
<div class="a" style="left:62px;top:288px;width:53px;height:24px;border-top:1px solid #fff;border-left:1px solid #fff;border-right:1px solid #716f64;border-bottom:1px solid #716f64;box-shadow:inset -1px -1px 0 #aca899;"></div>
<div class="a" style="left:62px;top:291px;font-size:14px;color:#1010a0">Стереть</div>
<div class="a" style="left:120px;top:294px;width:12px;height:12px;border-top:1px solid #808080;border-left:1px solid #808080;background:#fff"></div>
<div class="a" style="left:140px;top:291px;font-size:14.5px;font-weight:bold;color:#1010c0">Зафикси</div>
<div class="a" style="left:205px;top:287px;width:1px;height:24px;background:#8a8878"></div>
<div class="a" style="left:210px;top:291px;font-size:12px;color:#108010">· ГАЗ</div>
<div class="a" style="left:238px;top:288px;width:55px;height:24px;border-top:1px solid #fff;border-left:1px solid #fff;border-right:1px solid #716f64;border-bottom:1px solid #716f64;box-shadow:inset -1px -1px 0 #aca899;"></div>
<div class="a" style="left:238px;top:291px;font-size:14px;color:#108010">Стереть</div>
<div class="a" style="left:701px;top:293px;font-size:13.5px;font-weight:bold;color:#111">P:</div>
<div class="a" style="left:723px;top:293px;font-size:13.5px;font-weight:bold;color:#108010">1,00</div>
<div class="a" style="left:755px;top:293px;font-size:13.5px;font-weight:bold;color:#101070">[ms]</div>
<div class="a" style="left:793px;top:293px;font-size:13.5px;font-weight:bold;color:#108010">10,0</div>
<div class="a" style="left:827px;top:84px;width:22px;height:47px;border-right:2px solid #8a8878;border-top:1px solid #fff;background:#ece9d8"></div>
<div class="a" style="left:832px;top:89px;font-size:13px;font-weight:bold;color:#111;writing-mode:vertical-rl">Карта</div>
<div class="a" style="left:827px;top:132px;width:21px;height:87px;border-right:2px solid #8a8878;border-bottom:2px solid #8a8878;border-top:1px solid #fff;border-left:1px solid #fff;background:#ece9d8"></div>
<div class="a" style="left:831px;top:138px;font-size:13px;font-weight:bold;color:#111;writing-mode:vertical-rl">Отклонение</div>
<div class="a" style="left:3px;top:316px;width:826px;height:2px;background:#8a8878"></div>
<div class="a" style="left:4px;top:319px;width:846px;height:230px;background:#fff"></div>
<svg width="1024" height="600" style="position:absolute;left:0;top:0" font-family="Liberation Sans">
<line x1="19.0" y1="488.5" x2="842.0" y2="488.5" stroke="#c4c4c4" stroke-dasharray="3,3"/>
<line x1="19.0" y1="449.5" x2="842.0" y2="449.5" stroke="#c4c4c4" stroke-dasharray="3,3"/>
<line x1="19.0" y1="410.5" x2="842.0" y2="410.5" stroke="#c4c4c4" stroke-dasharray="3,3"/>
<line x1="19.0" y1="371.5" x2="842.0" y2="371.5" stroke="#c4c4c4" stroke-dasharray="3,3"/>
<line x1="40.5" y1="332.5" x2="40.5" y2="526.5" stroke="#c4c4c4" stroke-dasharray="3,3"/>
<line x1="60.5" y1="332.5" x2="60.5" y2="526.5" stroke="#c4c4c4" stroke-dasharray="3,3"/>
<line x1="81.5" y1="332.5" x2="81.5" y2="526.5" stroke="#c4c4c4" stroke-dasharray="3,3"/>
<line x1="101.5" y1="332.5" x2="101.5" y2="526.5" stroke="#c4c4c4" stroke-dasharray="3,3"/>
<line x1="122.5" y1="332.5" x2="122.5" y2="526.5" stroke="#c4c4c4" stroke-dasharray="3,3"/>
<line x1="142.5" y1="332.5" x2="142.5" y2="526.5" stroke="#c4c4c4" stroke-dasharray="3,3"/>
<line x1="163.5" y1="332.5" x2="163.5" y2="526.5" stroke="#c4c4c4" stroke-dasharray="3,3"/>
<line x1="184.5" y1="332.5" x2="184.5" y2="526.5" stroke="#c4c4c4" stroke-dasharray="3,3"/>
<line x1="204.5" y1="332.5" x2="204.5" y2="526.5" stroke="#c4c4c4" stroke-dasharray="3,3"/>
<line x1="225.5" y1="332.5" x2="225.5" y2="526.5" stroke="#c4c4c4" stroke-dasharray="3,3"/>
<line x1="245.5" y1="332.5" x2="245.5" y2="526.5" stroke="#c4c4c4" stroke-dasharray="3,3"/>
<line x1="266.5" y1="332.5" x2="266.5" y2="526.5" stroke="#c4c4c4" stroke-dasharray="3,3"/>
<line x1="286.5" y1="332.5" x2="286.5" y2="526.5" stroke="#c4c4c4" stroke-dasharray="3,3"/>
<line x1="307.5" y1="332.5" x2="307.5" y2="526.5" stroke="#c4c4c4" stroke-dasharray="3,3"/>
<line x1="328.5" y1="332.5" x2="328.5" y2="526.5" stroke="#c4c4c4" stroke-dasharray="3,3"/>
<line x1="348.5" y1="332.5" x2="348.5" y2="526.5" stroke="#c4c4c4" stroke-dasharray="3,3"/>
<line x1="369.5" y1="332.5" x2="369.5" y2="526.5" stroke="#c4c4c4" stroke-dasharray="3,3"/>
<line x1="389.5" y1="332.5" x2="389.5" y2="526.5" stroke="#c4c4c4" stroke-dasharray="3,3"/>
<line x1="410.5" y1="332.5" x2="410.5" y2="526.5" stroke="#c4c4c4" stroke-dasharray="3,3"/>
<line x1="430.5" y1="332.5" x2="430.5" y2="526.5" stroke="#c4c4c4" stroke-dasharray="3,3"/>
<line x1="451.5" y1="332.5" x2="451.5" y2="526.5" stroke="#c4c4c4" stroke-dasharray="3,3"/>
<line x1="472.5" y1="332.5" x2="472.5" y2="526.5" stroke="#c4c4c4" stroke-dasharray="3,3"/>
<line x1="492.5" y1="332.5" x2="492.5" y2="526.5" stroke="#c4c4c4" stroke-dasharray="3,3"/>
<line x1="513.5" y1="332.5" x2="513.5" y2="526.5" stroke="#c4c4c4" stroke-dasharray="3,3"/>
<line x1="533.5" y1="332.5" x2="533.5" y2="526.5" stroke="#c4c4c4" stroke-dasharray="3,3"/>
<line x1="554.5" y1="332.5" x2="554.5" y2="526.5" stroke="#c4c4c4" stroke-dasharray="3,3"/>
<line x1="575.5" y1="332.5" x2="575.5" y2="526.5" stroke="#c4c4c4" stroke-dasharray="3,3"/>
<line x1="595.5" y1="332.5" x2="595.5" y2="526.5" stroke="#c4c4c4" stroke-dasharray="3,3"/>
<line x1="616.5" y1="332.5" x2="616.5" y2="526.5" stroke="#c4c4c4" stroke-dasharray="3,3"/>
<line x1="636.5" y1="332.5" x2="636.5" y2="526.5" stroke="#c4c4c4" stroke-dasharray="3,3"/>
<line x1="657.5" y1="332.5" x2="657.5" y2="526.5" stroke="#c4c4c4" stroke-dasharray="3,3"/>
<line x1="677.5" y1="332.5" x2="677.5" y2="526.5" stroke="#c4c4c4" stroke-dasharray="3,3"/>
<line x1="698.5" y1="332.5" x2="698.5" y2="526.5" stroke="#c4c4c4" stroke-dasharray="3,3"/>
<line x1="719.5" y1="332.5" x2="719.5" y2="526.5" stroke="#c4c4c4" stroke-dasharray="3,3"/>
<line x1="739.5" y1="332.5" x2="739.5" y2="526.5" stroke="#c4c4c4" stroke-dasharray="3,3"/>
<line x1="760.5" y1="332.5" x2="760.5" y2="526.5" stroke="#c4c4c4" stroke-dasharray="3,3"/>
<line x1="780.5" y1="332.5" x2="780.5" y2="526.5" stroke="#c4c4c4" stroke-dasharray="3,3"/>
<line x1="801.5" y1="332.5" x2="801.5" y2="526.5" stroke="#c4c4c4" stroke-dasharray="3,3"/>
<line x1="821.5" y1="332.5" x2="821.5" y2="526.5" stroke="#c4c4c4" stroke-dasharray="3,3"/>
<line x1="842.0" y1="332.5" x2="842.0" y2="526.5" stroke="#111" stroke-width="1.5" stroke-dasharray="3,2"/>
<line x1="19.0" y1="332.5" x2="842.0" y2="332.5" stroke="#111" stroke-width="1.5" stroke-dasharray="3,2"/>
<text x="13.5" y="530.0" text-anchor="end" font-size="11" fill="#111">0</text>
<line x1="15.0" y1="526.5" x2="19.0" y2="526.5" stroke="#111"/>
<line x1="17.0" y1="518.7" x2="19.0" y2="518.7" stroke="#111"/>
<line x1="17.0" y1="511.0" x2="19.0" y2="511.0" stroke="#111"/>
<line x1="17.0" y1="503.2" x2="19.0" y2="503.2" stroke="#111"/>
<line x1="17.0" y1="495.5" x2="19.0" y2="495.5" stroke="#111"/>
<text x="13.5" y="491.2" text-anchor="end" font-size="11" fill="#111">1</text>
<line x1="15.0" y1="487.7" x2="19.0" y2="487.7" stroke="#111"/>
<line x1="17.0" y1="479.9" x2="19.0" y2="479.9" stroke="#111"/>
<line x1="17.0" y1="472.2" x2="19.0" y2="472.2" stroke="#111"/>
<line x1="17.0" y1="464.4" x2="19.0" y2="464.4" stroke="#111"/>
<line x1="17.0" y1="456.7" x2="19.0" y2="456.7" stroke="#111"/>
<text x="13.5" y="452.4" text-anchor="end" font-size="11" fill="#111">2</text>
<line x1="15.0" y1="448.9" x2="19.0" y2="448.9" stroke="#111"/>
<line x1="17.0" y1="441.1" x2="19.0" y2="441.1" stroke="#111"/>
<line x1="17.0" y1="433.4" x2="19.0" y2="433.4" stroke="#111"/>
<line x1="17.0" y1="425.6" x2="19.0" y2="425.6" stroke="#111"/>
<line x1="17.0" y1="417.9" x2="19.0" y2="417.9" stroke="#111"/>
<text x="13.5" y="413.6" text-anchor="end" font-size="11" fill="#111">3</text>
<line x1="15.0" y1="410.1" x2="19.0" y2="410.1" stroke="#111"/>
<line x1="17.0" y1="402.3" x2="19.0" y2="402.3" stroke="#111"/>
<line x1="17.0" y1="394.6" x2="19.0" y2="394.6" stroke="#111"/>
<line x1="17.0" y1="386.8" x2="19.0" y2="386.8" stroke="#111"/>
<line x1="17.0" y1="379.1" x2="19.0" y2="379.1" stroke="#111"/>
<text x="13.5" y="374.8" text-anchor="end" font-size="11" fill="#111">4</text>
<line x1="15.0" y1="371.3" x2="19.0" y2="371.3" stroke="#111"/>
<line x1="17.0" y1="363.5" x2="19.0" y2="363.5" stroke="#111"/>
<line x1="17.0" y1="355.8" x2="19.0" y2="355.8" stroke="#111"/>
<line x1="17.0" y1="348.0" x2="19.0" y2="348.0" stroke="#111"/>
<line x1="17.0" y1="340.3" x2="19.0" y2="340.3" stroke="#111"/>
<text x="13.5" y="336.0" text-anchor="end" font-size="11" fill="#111">5</text>
<line x1="15.0" y1="332.5" x2="19.0" y2="332.5" stroke="#111"/>
<text x="19.0" y="544.0" text-anchor="middle" font-size="10.3" fill="#111">0</text>
<text x="39.6" y="544.0" text-anchor="middle" font-size="10.3" fill="#111">5</text>
<text x="60.2" y="544.0" text-anchor="middle" font-size="10.3" fill="#111">10</text>
<text x="80.7" y="544.0" text-anchor="middle" font-size="10.3" fill="#111">15</text>
<text x="101.3" y="544.0" text-anchor="middle" font-size="10.3" fill="#111">20</text>
<text x="121.9" y="544.0" text-anchor="middle" font-size="10.3" fill="#111">25</text>
<text x="142.4" y="544.0" text-anchor="middle" font-size="10.3" fill="#111">30</text>
<text x="163.0" y="544.0" text-anchor="middle" font-size="10.3" fill="#111">35</text>
<text x="183.6" y="544.0" text-anchor="middle" font-size="10.3" fill="#111">40</text>
<text x="204.2" y="544.0" text-anchor="middle" font-size="10.3" fill="#111">45</text>
<text x="224.8" y="544.0" text-anchor="middle" font-size="10.3" fill="#111">50</text>
<text x="245.3" y="544.0" text-anchor="middle" font-size="10.3" fill="#111">55</text>
<text x="265.9" y="544.0" text-anchor="middle" font-size="10.3" fill="#111">60</text>
<text x="286.5" y="544.0" text-anchor="middle" font-size="10.3" fill="#111">65</text>
<text x="307.1" y="544.0" text-anchor="middle" font-size="10.3" fill="#111">70</text>
<text x="327.6" y="544.0" text-anchor="middle" font-size="10.3" fill="#111">75</text>
<text x="348.2" y="544.0" text-anchor="middle" font-size="10.3" fill="#111">80</text>
<text x="368.8" y="544.0" text-anchor="middle" font-size="10.3" fill="#111">85</text>
<text x="389.4" y="544.0" text-anchor="middle" font-size="10.3" fill="#111">90</text>
<text x="409.9" y="544.0" text-anchor="middle" font-size="10.3" fill="#111">95</text>
<text x="430.5" y="544.0" text-anchor="middle" font-size="10.3" fill="#111">100</text>
<text x="451.1" y="544.0" text-anchor="middle" font-size="10.3" fill="#111">105</text>
<text x="471.7" y="544.0" text-anchor="middle" font-size="10.3" fill="#111">110</text>
<text x="492.2" y="544.0" text-anchor="middle" font-size="10.3" fill="#111">115</text>
<text x="512.8" y="544.0" text-anchor="middle" font-size="10.3" fill="#111">120</text>
<text x="533.4" y="544.0" text-anchor="middle" font-size="10.3" fill="#111">125</text>
<text x="554.0" y="544.0" text-anchor="middle" font-size="10.3" fill="#111">130</text>
<text x="574.5" y="544.0" text-anchor="middle" font-size="10.3" fill="#111">135</text>
<text x="595.1" y="544.0" text-anchor="middle" font-size="10.3" fill="#111">140</text>
<text x="615.7" y="544.0" text-anchor="middle" font-size="10.3" fill="#111">145</text>
<text x="636.2" y="544.0" text-anchor="middle" font-size="10.3" fill="#111">150</text>
<text x="656.8" y="544.0" text-anchor="middle" font-size="10.3" fill="#111">155</text>
<text x="677.4" y="544.0" text-anchor="middle" font-size="10.3" fill="#111">160</text>
<text x="698.0" y="544.0" text-anchor="middle" font-size="10.3" fill="#111">165</text>
<text x="718.6" y="544.0" text-anchor="middle" font-size="10.3" fill="#111">170</text>
<text x="739.1" y="544.0" text-anchor="middle" font-size="10.3" fill="#111">175</text>
<text x="759.7" y="544.0" text-anchor="middle" font-size="10.3" fill="#111">180</text>
<text x="780.3" y="544.0" text-anchor="middle" font-size="10.3" fill="#111">185</text>
<text x="800.9" y="544.0" text-anchor="middle" font-size="10.3" fill="#111">190</text>
<text x="821.4" y="544.0" text-anchor="middle" font-size="10.3" fill="#111">195</text>
<text x="842.0" y="544.0" text-anchor="middle" font-size="10.3" fill="#111">200</text>
<line x1="19.0" y1="526.5" x2="19.0" y2="531.5" stroke="#000" stroke-width="1.2"/>
<line x1="23.1" y1="526.5" x2="23.1" y2="530.5" stroke="#999" stroke-width="1"/>
<line x1="27.2" y1="526.5" x2="27.2" y2="530.5" stroke="#999" stroke-width="1"/>
<line x1="31.3" y1="526.5" x2="31.3" y2="530.5" stroke="#999" stroke-width="1"/>
<line x1="35.5" y1="526.5" x2="35.5" y2="530.5" stroke="#999" stroke-width="1"/>
<line x1="39.6" y1="526.5" x2="39.6" y2="531.5" stroke="#000" stroke-width="1.2"/>
<line x1="43.7" y1="526.5" x2="43.7" y2="530.5" stroke="#999" stroke-width="1"/>
<line x1="47.8" y1="526.5" x2="47.8" y2="530.5" stroke="#999" stroke-width="1"/>
<line x1="51.9" y1="526.5" x2="51.9" y2="530.5" stroke="#999" stroke-width="1"/>
<line x1="56.0" y1="526.5" x2="56.0" y2="530.5" stroke="#999" stroke-width="1"/>
<line x1="60.2" y1="526.5" x2="60.2" y2="531.5" stroke="#000" stroke-width="1.2"/>
<line x1="64.3" y1="526.5" x2="64.3" y2="530.5" stroke="#999" stroke-width="1"/>
<line x1="68.4" y1="526.5" x2="68.4" y2="530.5" stroke="#999" stroke-width="1"/>
<line x1="72.5" y1="526.5" x2="72.5" y2="530.5" stroke="#999" stroke-width="1"/>
<line x1="76.6" y1="526.5" x2="76.6" y2="530.5" stroke="#999" stroke-width="1"/>
<line x1="80.7" y1="526.5" x2="80.7" y2="531.5" stroke="#000" stroke-width="1.2"/>
<line x1="84.8" y1="526.5" x2="84.8" y2="530.5" stroke="#999" stroke-width="1"/>
<line x1="89.0" y1="526.5" x2="89.0" y2="530.5" stroke="#999" stroke-width="1"/>
<line x1="93.1" y1="526.5" x2="93.1" y2="530.5" stroke="#999" stroke-width="1"/>
<line x1="97.2" y1="526.5" x2="97.2" y2="530.5" stroke="#999" stroke-width="1"/>
<line x1="101.3" y1="526.5" x2="101.3" y2="531.5" stroke="#000" stroke-width="1.2"/>
<line x1="105.4" y1="526.5" x2="105.4" y2="530.5" stroke="#999" stroke-width="1"/>
<line x1="109.5" y1="526.5" x2="109.5" y2="530.5" stroke="#999" stroke-width="1"/>
<line x1="113.6" y1="526.5" x2="113.6" y2="530.5" stroke="#999" stroke-width="1"/>
<line x1="117.8" y1="526.5" x2="117.8" y2="530.5" stroke="#999" stroke-width="1"/>
<line x1="121.9" y1="526.5" x2="121.9" y2="531.5" stroke="#000" stroke-width="1.2"/>
<line x1="126.0" y1="526.5" x2="126.0" y2="530.5" stroke="#999" stroke-width="1"/>
<line x1="130.1" y1="526.5" x2="130.1" y2="530.5" stroke="#999" stroke-width="1"/>
<line x1="134.2" y1="526.5" x2="134.2" y2="530.5" stroke="#999" stroke-width="1"/>
<line x1="138.3" y1="526.5" x2="138.3" y2="530.5" stroke="#999" stroke-width="1"/>
<line x1="142.4" y1="526.5" x2="142.4" y2="531.5" stroke="#000" stroke-width="1.2"/>
<line x1="146.6" y1="526.5" x2="146.6" y2="530.5" stroke="#999" stroke-width="1"/>
<line x1="150.7" y1="526.5" x2="150.7" y2="530.5" stroke="#999" stroke-width="1"/>
<line x1="154.8" y1="526.5" x2="154.8" y2="530.5" stroke="#999" stroke-width="1"/>
<line x1="158.9" y1="526.5" x2="158.9" y2="530.5" stroke="#999" stroke-width="1"/>
<line x1="163.0" y1="526.5" x2="163.0" y2="531.5" stroke="#000" stroke-width="1.2"/>
<line x1="167.1" y1="526.5" x2="167.1" y2="530.5" stroke="#999" stroke-width="1"/>
<line x1="171.3" y1="526.5" x2="171.3" y2="530.5" stroke="#999" stroke-width="1"/>
<line x1="175.4" y1="526.5" x2="175.4" y2="530.5" stroke="#999" stroke-width="1"/>
<line x1="179.5" y1="526.5" x2="179.5" y2="530.5" stroke="#999" stroke-width="1"/>
<line x1="183.6" y1="526.5" x2="183.6" y2="531.5" stroke="#000" stroke-width="1.2"/>
<line x1="187.7" y1="526.5" x2="187.7" y2="530.5" stroke="#999" stroke-width="1"/>
<line x1="191.8" y1="526.5" x2="191.8" y2="530.5" stroke="#999" stroke-width="1"/>
<line x1="195.9" y1="526.5" x2="195.9" y2="530.5" stroke="#999" stroke-width="1"/>
<line x1="200.1" y1="526.5" x2="200.1" y2="530.5" stroke="#999" stroke-width="1"/>
<line x1="204.2" y1="526.5" x2="204.2" y2="531.5" stroke="#000" stroke-width="1.2"/>
<line x1="208.3" y1="526.5" x2="208.3" y2="530.5" stroke="#999" stroke-width="1"/>
<line x1="212.4" y1="526.5" x2="212.4" y2="530.5" stroke="#999" stroke-width="1"/>
<line x1="216.5" y1="526.5" x2="216.5" y2="530.5" stroke="#999" stroke-width="1"/>
<line x1="220.6" y1="526.5" x2="220.6" y2="530.5" stroke="#999" stroke-width="1"/>
<line x1="224.8" y1="526.5" x2="224.8" y2="531.5" stroke="#000" stroke-width="1.2"/>
<line x1="228.9" y1="526.5" x2="228.9" y2="530.5" stroke="#999" stroke-width="1"/>
<line x1="233.0" y1="526.5" x2="233.0" y2="530.5" stroke="#999" stroke-width="1"/>
<line x1="237.1" y1="526.5" x2="237.1" y2="530.5" stroke="#999" stroke-width="1"/>
<line x1="241.2" y1="526.5" x2="241.2" y2="530.5" stroke="#999" stroke-width="1"/>
<line x1="245.3" y1="526.5" x2="245.3" y2="531.5" stroke="#000" stroke-width="1.2"/>
<line x1="249.4" y1="526.5" x2="249.4" y2="530.5" stroke="#999" stroke-width="1"/>
<line x1="253.6" y1="526.5" x2="253.6" y2="530.5" stroke="#999" stroke-width="1"/>
<line x1="257.7" y1="526.5" x2="257.7" y2="530.5" stroke="#999" stroke-width="1"/>
<line x1="261.8" y1="526.5" x2="261.8" y2="530.5" stroke="#999" stroke-width="1"/>
<line x1="265.9" y1="526.5" x2="265.9" y2="531.5" stroke="#000" stroke-width="1.2"/>
<line x1="270.0" y1="526.5" x2="270.0" y2="530.5" stroke="#999" stroke-width="1"/>
<line x1="274.1" y1="526.5" x2="274.1" y2="530.5" stroke="#999" stroke-width="1"/>
<line x1="278.2" y1="526.5" x2="278.2" y2="530.5" stroke="#999" stroke-width="1"/>
<line x1="282.4" y1="526.5" x2="282.4" y2="530.5" stroke="#999" stroke-width="1"/>
<line x1="286.5" y1="526.5" x2="286.5" y2="531.5" stroke="#000" stroke-width="1.2"/>
<line x1="290.6" y1="526.5" x2="290.6" y2="530.5" stroke="#999" stroke-width="1"/>
<line x1="294.7" y1="526.5" x2="294.7" y2="530.5" stroke="#999" stroke-width="1"/>
<line x1="298.8" y1="526.5" x2="298.8" y2="530.5" stroke="#999" stroke-width="1"/>
<line x1="302.9" y1="526.5" x2="302.9" y2="530.5" stroke="#999" stroke-width="1"/>
<line x1="307.1" y1="526.5" x2="307.1" y2="531.5" stroke="#000" stroke-width="1.2"/>
<line x1="311.2" y1="526.5" x2="311.2" y2="530.5" stroke="#999" stroke-width="1"/>
<line x1="315.3" y1="526.5" x2="315.3" y2="530.5" stroke="#999" stroke-width="1"/>
<line x1="319.4" y1="526.5" x2="319.4" y2="530.5" stroke="#999" stroke-width="1"/>
<line x1="323.5" y1="526.5" x2="323.5" y2="530.5" stroke="#999" stroke-width="1"/>
<line x1="327.6" y1="526.5" x2="327.6" y2="531.5" stroke="#000" stroke-width="1.2"/>
<line x1="331.7" y1="526.5" x2="331.7" y2="530.5" stroke="#999" stroke-width="1"/>
<line x1="335.9" y1="526.5" x2="335.9" y2="530.5" stroke="#999" stroke-width="1"/>
<line x1="340.0" y1="526.5" x2="340.0" y2="530.5" stroke="#999" stroke-width="1"/>
<line x1="344.1" y1="526.5" x2="344.1" y2="530.5" stroke="#999" stroke-width="1"/>
<line x1="348.2" y1="526.5" x2="348.2" y2="531.5" stroke="#000" stroke-width="1.2"/>
<line x1="352.3" y1="526.5" x2="352.3" y2="530.5" stroke="#999" stroke-width="1"/>
<line x1="356.4" y1="526.5" x2="356.4" y2="530.5" stroke="#999" stroke-width="1"/>
<line x1="360.5" y1="526.5" x2="360.5" y2="530.5" stroke="#999" stroke-width="1"/>
<line x1="364.7" y1="526.5" x2="364.7" y2="530.5" stroke="#999" stroke-width="1"/>
<line x1="368.8" y1="526.5" x2="368.8" y2="531.5" stroke="#000" stroke-width="1.2"/>
<line x1="372.9" y1="526.5" x2="372.9" y2="530.5" stroke="#999" stroke-width="1"/>
<line x1="377.0" y1="526.5" x2="377.0" y2="530.5" stroke="#999" stroke-width="1"/>
<line x1="381.1" y1="526.5" x2="381.1" y2="530.5" stroke="#999" stroke-width="1"/>
<line x1="385.2" y1="526.5" x2="385.2" y2="530.5" stroke="#999" stroke-width="1"/>
<line x1="389.4" y1="526.5" x2="389.4" y2="531.5" stroke="#000" stroke-width="1.2"/>
<line x1="393.5" y1="526.5" x2="393.5" y2="530.5" stroke="#999" stroke-width="1"/>
<line x1="397.6" y1="526.5" x2="397.6" y2="530.5" stroke="#999" stroke-width="1"/>
<line x1="401.7" y1="526.5" x2="401.7" y2="530.5" stroke="#999" stroke-width="1"/>
<line x1="405.8" y1="526.5" x2="405.8" y2="530.5" stroke="#999" stroke-width="1"/>
<line x1="409.9" y1="526.5" x2="409.9" y2="531.5" stroke="#000" stroke-width="1.2"/>
<line x1="414.0" y1="526.5" x2="414.0" y2="530.5" stroke="#999" stroke-width="1"/>
<line x1="418.2" y1="526.5" x2="418.2" y2="530.5" stroke="#999" stroke-width="1"/>
<line x1="422.3" y1="526.5" x2="422.3" y2="530.5" stroke="#999" stroke-width="1"/>
<line x1="426.4" y1="526.5" x2="426.4" y2="530.5" stroke="#999" stroke-width="1"/>
<line x1="430.5" y1="526.5" x2="430.5" y2="531.5" stroke="#000" stroke-width="1.2"/>
<line x1="434.6" y1="526.5" x2="434.6" y2="530.5" stroke="#999" stroke-width="1"/>
<line x1="438.7" y1="526.5" x2="438.7" y2="530.5" stroke="#999" stroke-width="1"/>
<line x1="442.8" y1="526.5" x2="442.8" y2="530.5" stroke="#999" stroke-width="1"/>
<line x1="447.0" y1="526.5" x2="447.0" y2="530.5" stroke="#999" stroke-width="1"/>
<line x1="451.1" y1="526.5" x2="451.1" y2="531.5" stroke="#000" stroke-width="1.2"/>
<line x1="455.2" y1="526.5" x2="455.2" y2="530.5" stroke="#999" stroke-width="1"/>
<line x1="459.3" y1="526.5" x2="459.3" y2="530.5" stroke="#999" stroke-width="1"/>
<line x1="463.4" y1="526.5" x2="463.4" y2="530.5" stroke="#999" stroke-width="1"/>
<line x1="467.5" y1="526.5" x2="467.5" y2="530.5" stroke="#999" stroke-width="1"/>
<line x1="471.7" y1="526.5" x2="471.7" y2="531.5" stroke="#000" stroke-width="1.2"/>
<line x1="475.8" y1="526.5" x2="475.8" y2="530.5" stroke="#999" stroke-width="1"/>
<line x1="479.9" y1="526.5" x2="479.9" y2="530.5" stroke="#999" stroke-width="1"/>
<line x1="484.0" y1="526.5" x2="484.0" y2="530.5" stroke="#999" stroke-width="1"/>
<line x1="488.1" y1="526.5" x2="488.1" y2="530.5" stroke="#999" stroke-width="1"/>
<line x1="492.2" y1="526.5" x2="492.2" y2="531.5" stroke="#000" stroke-width="1.2"/>
<line x1="496.3" y1="526.5" x2="496.3" y2="530.5" stroke="#999" stroke-width="1"/>
<line x1="500.5" y1="526.5" x2="500.5" y2="530.5" stroke="#999" stroke-width="1"/>
<line x1="504.6" y1="526.5" x2="504.6" y2="530.5" stroke="#999" stroke-width="1"/>
<line x1="508.7" y1="526.5" x2="508.7" y2="530.5" stroke="#999" stroke-width="1"/>
<line x1="512.8" y1="526.5" x2="512.8" y2="531.5" stroke="#000" stroke-width="1.2"/>
<line x1="516.9" y1="526.5" x2="516.9" y2="530.5" stroke="#999" stroke-width="1"/>
<line x1="521.0" y1="526.5" x2="521.0" y2="530.5" stroke="#999" stroke-width="1"/>
<line x1="525.1" y1="526.5" x2="525.1" y2="530.5" stroke="#999" stroke-width="1"/>
<line x1="529.3" y1="526.5" x2="529.3" y2="530.5" stroke="#999" stroke-width="1"/>
<line x1="533.4" y1="526.5" x2="533.4" y2="531.5" stroke="#000" stroke-width="1.2"/>
<line x1="537.5" y1="526.5" x2="537.5" y2="530.5" stroke="#999" stroke-width="1"/>
<line x1="541.6" y1="526.5" x2="541.6" y2="530.5" stroke="#999" stroke-width="1"/>
<line x1="545.7" y1="526.5" x2="545.7" y2="530.5" stroke="#999" stroke-width="1"/>
<line x1="549.8" y1="526.5" x2="549.8" y2="530.5" stroke="#999" stroke-width="1"/>
<line x1="554.0" y1="526.5" x2="554.0" y2="531.5" stroke="#000" stroke-width="1.2"/>
<line x1="558.1" y1="526.5" x2="558.1" y2="530.5" stroke="#999" stroke-width="1"/>
<line x1="562.2" y1="526.5" x2="562.2" y2="530.5" stroke="#999" stroke-width="1"/>
<line x1="566.3" y1="526.5" x2="566.3" y2="530.5" stroke="#999" stroke-width="1"/>
<line x1="570.4" y1="526.5" x2="570.4" y2="530.5" stroke="#999" stroke-width="1"/>
<line x1="574.5" y1="526.5" x2="574.5" y2="531.5" stroke="#000" stroke-width="1.2"/>
<line x1="578.6" y1="526.5" x2="578.6" y2="530.5" stroke="#999" stroke-width="1"/>
<line x1="582.8" y1="526.5" x2="582.8" y2="530.5" stroke="#999" stroke-width="1"/>
<line x1="586.9" y1="526.5" x2="586.9" y2="530.5" stroke="#999" stroke-width="1"/>
<line x1="591.0" y1="526.5" x2="591.0" y2="530.5" stroke="#999" stroke-width="1"/>
<line x1="595.1" y1="526.5" x2="595.1" y2="531.5" stroke="#000" stroke-width="1.2"/>
<line x1="599.2" y1="526.5" x2="599.2" y2="530.5" stroke="#999" stroke-width="1"/>
<line x1="603.3" y1="526.5" x2="603.3" y2="530.5" stroke="#999" stroke-width="1"/>
<line x1="607.4" y1="526.5" x2="607.4" y2="530.5" stroke="#999" stroke-width="1"/>
<line x1="611.6" y1="526.5" x2="611.6" y2="530.5" stroke="#999" stroke-width="1"/>
<line x1="615.7" y1="526.5" x2="615.7" y2="531.5" stroke="#000" stroke-width="1.2"/>
<line x1="619.8" y1="526.5" x2="619.8" y2="530.5" stroke="#999" stroke-width="1"/>
<line x1="623.9" y1="526.5" x2="623.9" y2="530.5" stroke="#999" stroke-width="1"/>
<line x1="628.0" y1="526.5" x2="628.0" y2="530.5" stroke="#999" stroke-width="1"/>
<line x1="632.1" y1="526.5" x2="632.1" y2="530.5" stroke="#999" stroke-width="1"/>
<line x1="636.2" y1="526.5" x2="636.2" y2="531.5" stroke="#000" stroke-width="1.2"/>
<line x1="640.4" y1="526.5" x2="640.4" y2="530.5" stroke="#999" stroke-width="1"/>
<line x1="644.5" y1="526.5" x2="644.5" y2="530.5" stroke="#999" stroke-width="1"/>
<line x1="648.6" y1="526.5" x2="648.6" y2="530.5" stroke="#999" stroke-width="1"/>
<line x1="652.7" y1="526.5" x2="652.7" y2="530.5" stroke="#999" stroke-width="1"/>
<line x1="656.8" y1="526.5" x2="656.8" y2="531.5" stroke="#000" stroke-width="1.2"/>
<line x1="660.9" y1="526.5" x2="660.9" y2="530.5" stroke="#999" stroke-width="1"/>
<line x1="665.1" y1="526.5" x2="665.1" y2="530.5" stroke="#999" stroke-width="1"/>
<line x1="669.2" y1="526.5" x2="669.2" y2="530.5" stroke="#999" stroke-width="1"/>
<line x1="673.3" y1="526.5" x2="673.3" y2="530.5" stroke="#999" stroke-width="1"/>
<line x1="677.4" y1="526.5" x2="677.4" y2="531.5" stroke="#000" stroke-width="1.2"/>
<line x1="681.5" y1="526.5" x2="681.5" y2="530.5" stroke="#999" stroke-width="1"/>
<line x1="685.6" y1="526.5" x2="685.6" y2="530.5" stroke="#999" stroke-width="1"/>
<line x1="689.7" y1="526.5" x2="689.7" y2="530.5" stroke="#999" stroke-width="1"/>
<line x1="693.9" y1="526.5" x2="693.9" y2="530.5" stroke="#999" stroke-width="1"/>
<line x1="698.0" y1="526.5" x2="698.0" y2="531.5" stroke="#000" stroke-width="1.2"/>
<line x1="702.1" y1="526.5" x2="702.1" y2="530.5" stroke="#999" stroke-width="1"/>
<line x1="706.2" y1="526.5" x2="706.2" y2="530.5" stroke="#999" stroke-width="1"/>
<line x1="710.3" y1="526.5" x2="710.3" y2="530.5" stroke="#999" stroke-width="1"/>
<line x1="714.4" y1="526.5" x2="714.4" y2="530.5" stroke="#999" stroke-width="1"/>
<line x1="718.6" y1="526.5" x2="718.6" y2="531.5" stroke="#000" stroke-width="1.2"/>
<line x1="722.7" y1="526.5" x2="722.7" y2="530.5" stroke="#999" stroke-width="1"/>
<line x1="726.8" y1="526.5" x2="726.8" y2="530.5" stroke="#999" stroke-width="1"/>
<line x1="730.9" y1="526.5" x2="730.9" y2="530.5" stroke="#999" stroke-width="1"/>
<line x1="735.0" y1="526.5" x2="735.0" y2="530.5" stroke="#999" stroke-width="1"/>
<line x1="739.1" y1="526.5" x2="739.1" y2="531.5" stroke="#000" stroke-width="1.2"/>
<line x1="743.2" y1="526.5" x2="743.2" y2="530.5" stroke="#999" stroke-width="1"/>
<line x1="747.4" y1="526.5" x2="747.4" y2="530.5" stroke="#999" stroke-width="1"/>
<line x1="751.5" y1="526.5" x2="751.5" y2="530.5" stroke="#999" stroke-width="1"/>
<line x1="755.6" y1="526.5" x2="755.6" y2="530.5" stroke="#999" stroke-width="1"/>
<line x1="759.7" y1="526.5" x2="759.7" y2="531.5" stroke="#000" stroke-width="1.2"/>
<line x1="763.8" y1="526.5" x2="763.8" y2="530.5" stroke="#999" stroke-width="1"/>
<line x1="767.9" y1="526.5" x2="767.9" y2="530.5" stroke="#999" stroke-width="1"/>
<line x1="772.0" y1="526.5" x2="772.0" y2="530.5" stroke="#999" stroke-width="1"/>
<line x1="776.2" y1="526.5" x2="776.2" y2="530.5" stroke="#999" stroke-width="1"/>
<line x1="780.3" y1="526.5" x2="780.3" y2="531.5" stroke="#000" stroke-width="1.2"/>
<line x1="784.4" y1="526.5" x2="784.4" y2="530.5" stroke="#999" stroke-width="1"/>
<line x1="788.5" y1="526.5" x2="788.5" y2="530.5" stroke="#999" stroke-width="1"/>
<line x1="792.6" y1="526.5" x2="792.6" y2="530.5" stroke="#999" stroke-width="1"/>
<line x1="796.7" y1="526.5" x2="796.7" y2="530.5" stroke="#999" stroke-width="1"/>
<line x1="800.9" y1="526.5" x2="800.9" y2="531.5" stroke="#000" stroke-width="1.2"/>
<line x1="805.0" y1="526.5" x2="805.0" y2="530.5" stroke="#999" stroke-width="1"/>
<line x1="809.1" y1="526.5" x2="809.1" y2="530.5" stroke="#999" stroke-width="1"/>
<line x1="813.2" y1="526.5" x2="813.2" y2="530.5" stroke="#999" stroke-width="1"/>
<line x1="817.3" y1="526.5" x2="817.3" y2="530.5" stroke="#999" stroke-width="1"/>
<line x1="821.4" y1="526.5" x2="821.4" y2="531.5" stroke="#000" stroke-width="1.2"/>
<line x1="825.5" y1="526.5" x2="825.5" y2="530.5" stroke="#999" stroke-width="1"/>
<line x1="829.7" y1="526.5" x2="829.7" y2="530.5" stroke="#999" stroke-width="1"/>
<line x1="833.8" y1="526.5" x2="833.8" y2="530.5" stroke="#999" stroke-width="1"/>
<line x1="837.9" y1="526.5" x2="837.9" y2="530.5" stroke="#999" stroke-width="1"/>
<line x1="842.0" y1="526.5" x2="842.0" y2="531.5" stroke="#000" stroke-width="1.2"/>
<line x1="19.0" y1="333.1" x2="842.0" y2="333.1" stroke="#008000" stroke-width="3.4"/>
<line x1="19.0" y1="331.5" x2="842.0" y2="331.5" stroke="#111" stroke-width="1.2" stroke-dasharray="3,2"/>
<polyline fill="none" stroke="#800080" stroke-width="1.4"  points="19.0,372.5 28.0,372.5 32.0,371.2 842.0,371.2"/>
<polyline fill="none" stroke="#e8a050" stroke-width="1.2"  points="19.0,380.3 661.4,380.3 665.5,376.2 669.5,380.3 702.4,380.3 706.6,376.5 710.3,380.3 748.3,380.3 751.3,376.4 755.7,380.3 764.4,380.3 768.8,376.4 772.5,376.4 776.2,380.3 780.6,376.4 793.7,376.4 796.7,380.3 801.1,376.4 804.7,380.3 808.4,376.4 821.6,376.4 825.2,380.3 830.4,376.4 842.0,376.4"/>
<polyline fill="none" stroke="#702020" stroke-width="1.2"  points="19.0,384.4 607.3,384.4 612.1,380.5 616.2,384.4 620.3,380.5 624.4,384.4 636.0,384.4 640.2,380.5 644.3,384.4 649.7,380.5 653.8,384.4 661.4,384.4 665.5,380.5 669.5,384.4 702.4,384.4 706.5,380.5 710.5,384.4 727.1,384.4 730.8,380.4 760.8,380.4 764.4,384.2 768.8,380.4 773.2,380.4 776.9,384.2 784.2,384.2 789.4,380.4 842.0,380.4"/>
<polyline fill="none" stroke="#208020" stroke-width="1.2"  points="19.0,475.8 29.0,475.8 39.0,474.2 49.0,474.3 59.0,475.6 69.0,475.4 79.0,475.3 89.0,474.7 99.0,475.2 109.0,475.2 119.0,475.1 129.0,474.4 139.0,474.9 149.0,474.8 159.0,475.4 169.0,475.9 179.0,475.8 189.0,475.1 199.0,474.9 209.0,474.6 219.0,474.2 229.0,474.1 239.0,474.9 249.0,474.7 259.0,474.8 269.0,475.7 279.0,475.0 289.0,475.1 299.0,474.5 309.0,474.1 319.0,474.7 329.0,474.3 339.0,475.0 349.0,475.9 359.0,475.3 369.0,474.4 379.0,475.7 389.0,475.5 399.0,475.4 409.0,475.7 419.0,475.5 429.0,475.5 439.0,474.7 449.0,475.9 459.0,475.8 469.0,474.4 479.0,475.5 489.0,475.4 499.0,474.9 509.0,475.1 519.0,475.0 529.0,475.8 539.0,475.0 549.0,475.6 559.0,474.7 569.0,475.7 579.0,475.7 589.0,474.9 599.0,475.1 609.0,475.8 619.0,475.4 629.0,475.0 639.0,474.5 649.0,474.7 659.0,475.4 669.0,474.4 679.0,475.7 689.0,474.6 699.0,475.7 709.0,474.7 719.0,475.8 729.0,475.4 739.0,475.0 749.0,475.0 759.0,475.3 769.0,475.2 779.0,474.7 789.0,474.5 799.0,475.0 809.0,475.8 819.0,475.2 829.0,474.2 839.0,475.6"/>
<path fill="none" stroke="#e040e0" stroke-width="1.4" d="M19.3,476.5 C21.7,476.5 35.6,476.4 40.0,476.5 C44.4,476.6 54.6,476.6 56.9,477.0 C59.2,477.4 59.1,479.2 60.0,480.0 C60.9,480.8 62.7,483.2 64.4,484.0 C66.2,484.8 72.7,486.5 75.0,487.0 C77.3,487.5 80.8,488.3 83.7,488.5 C86.6,488.7 95.7,488.9 100.0,489.0 C104.3,489.1 116.8,489.7 120.3,489.0 C123.8,488.3 128.0,484.2 130.0,483.0 C132.0,481.8 135.3,479.5 137.4,478.6 C139.5,477.7 145.2,475.9 148.0,475.4 C150.8,474.9 158.2,474.0 161.0,474.0 C163.8,474.0 169.5,475.1 172.0,475.5 C174.5,475.9 180.7,476.8 182.6,477.6 C184.5,478.4 186.8,480.9 188.0,482.0 C189.2,483.1 191.3,486.4 193.3,487.2 C195.3,488.0 201.8,488.8 205.0,489.0 C208.2,489.2 218.7,489.9 221.0,489.0 C223.3,488.1 224.0,482.8 225.0,481.0 C226.0,479.2 227.7,474.4 229.8,473.5 C231.9,472.6 241.2,472.7 243.3,473.3 C245.4,473.9 246.8,477.4 248.0,479.0 C249.2,480.6 252.4,485.9 254.0,487.2 C255.6,488.5 258.4,489.5 261.5,489.8 C264.6,490.1 277.9,490.6 280.9,489.8 C283.9,489.0 285.4,484.5 287.3,482.9 C289.2,481.3 294.6,476.8 297.0,476.0 C299.4,475.2 306.1,475.1 307.7,475.8 C309.3,476.5 310.1,480.4 311.0,482.0 C311.9,483.6 313.2,488.3 315.2,489.4 C317.2,490.4 324.1,490.8 328.0,491.0 C331.9,491.2 345.7,491.8 348.5,491.0 C351.3,490.2 351.1,485.7 352.0,484.0 C352.9,482.3 354.7,477.8 356.0,476.5 C357.3,475.2 361.0,473.6 363.0,473.0 C365.0,472.4 370.7,470.6 373.0,471.0 C375.3,471.4 381.5,475.2 383.0,476.5 C384.5,477.8 385.1,480.5 386.0,482.0 C386.9,483.5 387.9,488.2 390.4,489.4 C392.9,490.6 402.8,492.6 407.6,492.6 C412.4,492.6 427.5,490.9 431.2,489.4 C434.9,487.9 437.4,481.8 439.0,480.0 C440.6,478.2 443.7,475.1 444.7,474.3 C445.7,473.5 447.2,473.4 447.9,473.3 C448.6,473.2 450.2,472.1 451.1,473.5 C452.0,474.9 454.0,482.9 455.4,485.0 C456.8,487.1 461.5,490.6 462.9,491.5 C464.3,492.4 464.1,492.7 467.2,492.8 C470.3,492.9 486.3,493.3 489.8,492.6 C493.3,491.9 495.9,489.2 497.3,487.2 C498.7,485.2 500.4,477.5 501.6,475.4 C502.8,473.3 505.9,470.2 508.0,469.6 C510.1,469.0 517.8,469.6 519.9,470.0 C522.0,470.4 524.9,471.7 526.3,473.3 C527.7,474.9 530.1,481.7 531.7,484.0 C533.3,486.3 536.8,491.6 540.3,492.6 C543.8,493.6 557.9,493.5 561.7,492.6 C565.5,491.7 570.5,487.3 572.5,485.0 C574.5,482.7 577.5,475.1 578.9,473.3 C580.3,471.5 582.4,470.0 584.3,469.6 C586.2,469.2 593.0,469.7 595.0,470.0 C597.0,470.3 600.1,470.2 601.5,472.2 C602.9,474.2 605.8,484.8 606.9,487.2 C608.0,489.6 609.5,491.9 611.2,492.6 C613.0,493.3 618.4,492.8 621.9,493.0 C625.4,493.2 637.0,494.3 641.2,494.1 C645.4,493.9 655.2,492.6 657.9,491.5 C660.6,490.4 663.1,487.3 664.3,485.0 C665.5,482.7 667.6,474.0 668.6,472.2 C669.6,470.4 671.1,469.9 672.9,469.6 C674.7,469.3 680.4,469.7 683.7,470.0 C687.0,470.3 696.9,471.2 700.9,471.8 C704.9,472.4 715.2,473.8 718.0,474.8 C720.8,475.9 723.0,478.7 724.5,480.8 C726.0,482.9 729.7,491.0 730.9,492.6 C732.1,494.2 732.7,494.2 735.2,494.3 C737.7,494.4 749.9,494.0 752.4,493.7 C754.9,493.4 755.4,493.8 756.7,491.5 C758.0,489.2 761.8,476.9 763.2,474.3 C764.6,471.7 766.8,470.1 768.5,469.6 C770.2,469.1 776.4,469.6 778.2,470.0 C780.0,470.4 782.4,471.3 783.6,473.3 C784.8,475.3 787.5,484.8 788.9,487.2 C790.3,489.6 793.1,492.8 795.4,493.7 C797.7,494.6 805.3,494.8 808.3,494.7 C811.3,494.6 818.7,494.2 821.2,493.2 C823.7,492.2 828.0,488.6 829.7,486.1 C831.5,483.7 835.1,474.2 836.2,472.2 C837.3,470.2 838.7,469.6 839.4,469.2 C840.1,468.8 841.7,469.0 842.0,469.0"/>
<polyline fill="none" stroke="#c03030" stroke-width="1.1"  points="19.0,496.5 373.0,496.5 378.0,500.5 842.0,500.5"/>
<line x1="19.0" y1="502.6" x2="842.0" y2="502.6" stroke="#308030" stroke-width="1.1"/>
<line x1="19.0" y1="511.1" x2="842.0" y2="511.1" stroke="#2030a0" stroke-width="1.1"/>
<line x1="19.0" y1="515.4" x2="842.0" y2="515.4" stroke="#a0a040" stroke-width="1.1"/>
<line x1="19" y1="332.5" x2="19" y2="528" stroke="#000" stroke-width="2.2"/>
<line x1="18" y1="527" x2="842.0" y2="527" stroke="#000" stroke-width="2.2"/>
</svg>
<div class="a" style="left:29px;top:493px;width:24px;height:24px;background:#ece9d8;border-top:1px solid #fff;border-left:1px solid #fff;border-right:1px solid #716f64;border-bottom:1px solid #716f64;box-shadow:inset -1px -1px 0 #aca899;"></div>
<div class="a" style="left:53.5px;top:493px;width:24px;height:24px;background:#ece9d8;border-top:1px solid #fff;border-left:1px solid #fff;border-right:1px solid #716f64;border-bottom:1px solid #716f64;box-shadow:inset -1px -1px 0 #aca899;"></div>
<div class="a" style="left:78.5px;top:493px;width:24px;height:24px;background:#ece9d8;border-top:1px solid #fff;border-left:1px solid #fff;border-right:1px solid #716f64;border-bottom:1px solid #716f64;box-shadow:inset -1px -1px 0 #aca899;"></div>
<div class="a" style="left:103.5px;top:493px;width:24px;height:24px;background:#ece9d8;border-top:1px solid #fff;border-left:1px solid #fff;border-right:1px solid #716f64;border-bottom:1px solid #716f64;box-shadow:inset -1px -1px 0 #aca899;"></div>
<div class="a" style="left:128px;top:493px;width:24px;height:24px;background:#ece9d8;border-top:1px solid #fff;border-left:1px solid #fff;border-right:1px solid #716f64;border-bottom:1px solid #716f64;box-shadow:inset -1px -1px 0 #aca899;"></div>
<div class="a" style="left:153px;top:493px;width:24px;height:24px;background:#ece9d8;border-top:1px solid #fff;border-left:1px solid #fff;border-right:1px solid #716f64;border-bottom:1px solid #716f64;box-shadow:inset -1px -1px 0 #aca899;"></div>
<svg width="1024" height="600" style="position:absolute;left:0;top:0">
<polygon points="37,498 46,505 37,512" fill="#108080"/>
<rect x="61" y="501" width="9" height="9" fill="#000"/>
<circle cx="90.5" cy="505.5" r="5.5" fill="#f00000"/>
<rect x="108.5" y="499.5" width="14" height="2.5" fill="#103a80"/>
<polygon points="109,504 122,504 115.5,511" fill="#103a80"/>
<polygon points="143,498 136,505.5 143,513" fill="#aca899"/>
<polygon points="162,498 169,505.5 162,513" fill="#aca899"/>
</svg>
<div class="a" style="left:852px;top:50px;width:1px;height:500px;background:#aca899"></div>
<div class="a" style="left:853px;top:50px;width:1px;height:500px;background:#716f64"></div>
<div class="a" style="left:854px;top:51px;width:168px;height:46px;border:1px solid #d0d0bf;border-radius:2px;box-shadow:inset 1px 1px 0 #fff, 1px 1px 0 #fff"></div><div class="a" style="left:861px;top:45px;padding:0 1px;background:#ece9d8;font-size:12px;font-weight:bold;color:#000;line-height:14px">Давление [Bar]</div>
<div class="a" style="left:862px;top:60px;font-size:17px;color:#108010;line-height:17px;letter-spacing:0px;-webkit-text-stroke:0.3px #108010">ГАЗ</div><div class="a" style="left:944px;top:62px;width:13px;height:13px;background:#fff;border-top:1px solid #808080;border-left:1px solid #808080;border-right:1px solid #f4f3ee;border-bottom:1px solid #f4f3ee;box-shadow:inset 1px 1px 0 #404040;"></div><svg class="a" style="left:944px;top:62px" width="13" height="13"><polyline points="3,6 5.5,8.5 10,3.5" fill="none" stroke="#000" stroke-width="2"/></svg><div class="a" style="right:10px;top:60px;font-size:16.5px;color:#0c0c60;line-height:17px;letter-spacing:0.6px;margin-right:-0.6px;-webkit-text-stroke:0.3px #0c0c60">1,33</div>
<div class="a" style="left:862px;top:78px;font-size:17px;color:#8a8a10;line-height:17px;letter-spacing:0px;-webkit-text-stroke:0.3px #8a8a10">МАР</div><div class="a" style="left:944px;top:80px;width:13px;height:13px;background:#fff;border-top:1px solid #808080;border-left:1px solid #808080;border-right:1px solid #f4f3ee;border-bottom:1px solid #f4f3ee;box-shadow:inset 1px 1px 0 #404040;"></div><svg class="a" style="left:944px;top:80px" width="13" height="13"><polyline points="3,6 5.5,8.5 10,3.5" fill="none" stroke="#000" stroke-width="2"/></svg><div class="a" style="right:10px;top:78px;font-size:16.5px;color:#0c0c60;line-height:17px;letter-spacing:0.6px;margin-right:-0.6px;-webkit-text-stroke:0.3px #0c0c60">0,32</div>
<div class="a" style="left:854px;top:105px;width:168px;height:162px;border:1px solid #d0d0bf;border-radius:2px;box-shadow:inset 1px 1px 0 #fff, 1px 1px 0 #fff"></div><div class="a" style="left:861px;top:99px;padding:0 1px;background:#ece9d8;font-size:12px;font-weight:bold;color:#000;line-height:14px">Время впрыска [ms]</div>
<div class="a" style="left:862px;top:113.0px;font-size:17px;color:#1010c8;line-height:17px;letter-spacing:0.4px;-webkit-text-stroke:0.3px #1010c8">форс. 1</div><div class="a" style="left:944px;top:115.0px;width:13px;height:13px;background:#fff;border-top:1px solid #808080;border-left:1px solid #808080;border-right:1px solid #f4f3ee;border-bottom:1px solid #f4f3ee;box-shadow:inset 1px 1px 0 #404040;"></div><svg class="a" style="left:944px;top:115.0px" width="13" height="13"><polyline points="3,6 5.5,8.5 10,3.5" fill="none" stroke="#000" stroke-width="2"/></svg><div class="a" style="right:10px;top:113.0px;font-size:16.5px;color:#0c0c60;line-height:17px;letter-spacing:0.6px;margin-right:-0.6px;-webkit-text-stroke:0.3px #0c0c60">3,7</div>
<div class="a" style="left:862px;top:129.9px;font-size:17px;color:#1010c8;line-height:17px;letter-spacing:0.4px;-webkit-text-stroke:0.3px #1010c8">форс. 2</div><div class="a" style="right:10px;top:129.9px;font-size:16.5px;color:#0c0c60;line-height:17px;letter-spacing:0.6px;margin-right:-0.6px;-webkit-text-stroke:0.3px #0c0c60">3,7</div>
<div class="a" style="left:862px;top:146.8px;font-size:17px;color:#1010c8;line-height:17px;letter-spacing:0.4px;-webkit-text-stroke:0.3px #1010c8">форс. 3</div><div class="a" style="right:10px;top:146.8px;font-size:16.5px;color:#0c0c60;line-height:17px;letter-spacing:0.6px;margin-right:-0.6px;-webkit-text-stroke:0.3px #0c0c60">3,7</div>
<div class="a" style="left:862px;top:163.7px;font-size:17px;color:#1010c8;line-height:17px;letter-spacing:0.4px;-webkit-text-stroke:0.3px #1010c8">форс. 4</div><div class="a" style="right:10px;top:163.7px;font-size:16.5px;color:#0c0c60;line-height:17px;letter-spacing:0.6px;margin-right:-0.6px;-webkit-text-stroke:0.3px #0c0c60">3,7</div>
<div class="a" style="left:862px;top:180.6px;font-size:17px;color:#1010c8;line-height:17px;letter-spacing:0.4px;-webkit-text-stroke:0.3px #1010c8">форс. 5</div><div class="a" style="right:10px;top:180.6px;font-size:16.5px;color:#0c0c60;line-height:17px;letter-spacing:0.6px;margin-right:-0.6px;-webkit-text-stroke:0.3px #0c0c60">3,3</div>
<div class="a" style="left:862px;top:197.5px;font-size:17px;color:#1010c8;line-height:17px;letter-spacing:0.4px;-webkit-text-stroke:0.3px #1010c8">форс. 6</div><div class="a" style="right:10px;top:197.5px;font-size:16.5px;color:#0c0c60;line-height:17px;letter-spacing:0.6px;margin-right:-0.6px;-webkit-text-stroke:0.3px #0c0c60">3,3</div>
<div class="a" style="left:862px;top:214.4px;font-size:17px;color:#1010c8;line-height:17px;letter-spacing:0.4px;-webkit-text-stroke:0.3px #1010c8">форс. 7</div><div class="a" style="right:10px;top:214.4px;font-size:16.5px;color:#0c0c60;line-height:17px;letter-spacing:0.6px;margin-right:-0.6px;-webkit-text-stroke:0.3px #0c0c60">3,3</div>
<div class="a" style="left:862px;top:231.3px;font-size:17px;color:#1010c8;line-height:17px;letter-spacing:0.4px;-webkit-text-stroke:0.3px #1010c8">форс. 8</div><div class="a" style="right:10px;top:231.3px;font-size:16.5px;color:#0c0c60;line-height:17px;letter-spacing:0.6px;margin-right:-0.6px;-webkit-text-stroke:0.3px #0c0c60">3,3</div>
<div class="a" style="left:862px;top:248px;font-size:17px;color:#108010;line-height:17px;letter-spacing:0px;-webkit-text-stroke:0.3px #108010">ГАЗ</div><div class="a" style="left:944px;top:250px;width:13px;height:13px;background:#fff;border-top:1px solid #808080;border-left:1px solid #808080;border-right:1px solid #f4f3ee;border-bottom:1px solid #f4f3ee;box-shadow:inset 1px 1px 0 #404040;"></div><svg class="a" style="left:944px;top:250px" width="13" height="13"><polyline points="3,6 5.5,8.5 10,3.5" fill="none" stroke="#000" stroke-width="2"/></svg><div class="a" style="right:10px;top:248px;font-size:16.5px;color:#0c0c60;line-height:17px;letter-spacing:0.6px;margin-right:-0.6px;-webkit-text-stroke:0.3px #0c0c60">5,8</div>
<div class="a" style="left:854px;top:274px;width:168px;height:47px;border:1px solid #d0d0bf;border-radius:2px;box-shadow:inset 1px 1px 0 #fff, 1px 1px 0 #fff"></div><div class="a" style="left:861px;top:268px;padding:0 1px;background:#ece9d8;font-size:12px;font-weight:bold;color:#000;line-height:14px">Температура&nbsp; [C]</div>
<div class="a" style="left:862px;top:283px;font-size:17px;color:#6a1010;line-height:17px;letter-spacing:0px;-webkit-text-stroke:0.3px #6a1010">ГАЗ</div><div class="a" style="left:944px;top:285px;width:13px;height:13px;background:#fff;border-top:1px solid #808080;border-left:1px solid #808080;border-right:1px solid #f4f3ee;border-bottom:1px solid #f4f3ee;box-shadow:inset 1px 1px 0 #404040;"></div><svg class="a" style="left:944px;top:285px" width="13" height="13"><polyline points="3,6 5.5,8.5 10,3.5" fill="none" stroke="#000" stroke-width="2"/></svg><div class="a" style="right:10px;top:283px;font-size:16.5px;color:#0c0c60;line-height:17px;letter-spacing:0.6px;margin-right:-0.6px;-webkit-text-stroke:0.3px #0c0c60">75</div>
<div class="a" style="left:862px;top:300px;font-size:17px;color:#e88a30;line-height:17px;letter-spacing:0px;-webkit-text-stroke:0.3px #e88a30">Ред.</div><div class="a" style="left:944px;top:302px;width:13px;height:13px;background:#fff;border-top:1px solid #808080;border-left:1px solid #808080;border-right:1px solid #f4f3ee;border-bottom:1px solid #f4f3ee;box-shadow:inset 1px 1px 0 #404040;"></div><svg class="a" style="left:944px;top:302px" width="13" height="13"><polyline points="3,6 5.5,8.5 10,3.5" fill="none" stroke="#000" stroke-width="2"/></svg><div class="a" style="right:10px;top:300px;font-size:16.5px;color:#0c0c60;line-height:17px;letter-spacing:0.6px;margin-right:-0.6px;-webkit-text-stroke:0.3px #0c0c60">77</div>
<div class="a" style="left:854px;top:328px;width:168px;height:62px;border:1px solid #d0d0bf;border-radius:2px;box-shadow:inset 1px 1px 0 #fff, 1px 1px 0 #fff"></div><div class="a" style="left:861px;top:322px;padding:0 1px;background:#ece9d8;font-size:12px;font-weight:bold;color:#000;line-height:14px">Напряжение [V]</div>
<div class="a" style="left:862px;top:335px;font-size:14px;font-weight:bold;color:#e040e0;line-height:17px;letter-spacing:0px;">Лямбда 1</div><div class="a" style="left:944px;top:337px;width:13px;height:13px;background:#fff;border-top:1px solid #808080;border-left:1px solid #808080;border-right:1px solid #f4f3ee;border-bottom:1px solid #f4f3ee;box-shadow:inset 1px 1px 0 #404040;"></div><svg class="a" style="left:944px;top:337px" width="13" height="13"><polyline points="3,6 5.5,8.5 10,3.5" fill="none" stroke="#000" stroke-width="2"/></svg><div class="a" style="right:10px;top:335px;font-size:16.5px;color:#0c0c60;line-height:17px;letter-spacing:0.6px;margin-right:-0.6px;-webkit-text-stroke:0.3px #0c0c60">1.47</div>
<div class="a" style="left:862px;top:351px;font-size:14px;font-weight:bold;color:#701070;line-height:17px;letter-spacing:0px;">Лямбда 2</div><div class="a" style="left:944px;top:353px;width:13px;height:13px;background:#fff;border-top:1px solid #808080;border-left:1px solid #808080;border-right:1px solid #f4f3ee;border-bottom:1px solid #f4f3ee;box-shadow:inset 1px 1px 0 #404040;"></div><svg class="a" style="left:944px;top:353px" width="13" height="13"><polyline points="3,6 5.5,8.5 10,3.5" fill="none" stroke="#000" stroke-width="2"/></svg><div class="a" style="right:10px;top:351px;font-size:16.5px;color:#0c0c60;line-height:17px;letter-spacing:0.6px;margin-right:-0.6px;-webkit-text-stroke:0.3px #0c0c60">3,98</div>
<div class="a" style="left:862px;top:368px;font-size:17px;color:#808020;line-height:17px;letter-spacing:0.5px;-webkit-text-stroke:0.3px #808020">Батарея</div><div class="a" style="left:944px;top:370px;width:13px;height:13px;background:#fff;border-top:1px solid #808080;border-left:1px solid #808080;border-right:1px solid #f4f3ee;border-bottom:1px solid #f4f3ee;box-shadow:inset 1px 1px 0 #404040;"></div><div class="a" style="right:10px;top:368px;font-size:16.5px;color:#0c0c60;line-height:17px;letter-spacing:0.6px;margin-right:-0.6px;-webkit-text-stroke:0.3px #0c0c60">13,15</div>
<div class="a" style="left:854px;top:399px;width:168px;height:27px;border:1px solid #d0d0bf;border-radius:2px;box-shadow:inset 1px 1px 0 #fff, 1px 1px 0 #fff"></div><div class="a" style="left:861px;top:393px;padding:0 1px;background:#ece9d8;font-size:12px;font-weight:bold;color:#000;line-height:14px">RPM [rpm]</div>
<div class="a" style="left:862px;top:407px;font-size:13.5px;font-weight:bold;color:#e01010;line-height:17px;letter-spacing:0px;">RPM</div><div class="a" style="left:944px;top:409px;width:13px;height:13px;background:#fff;border-top:1px solid #808080;border-left:1px solid #808080;border-right:1px solid #f4f3ee;border-bottom:1px solid #f4f3ee;box-shadow:inset 1px 1px 0 #404040;"></div><svg class="a" style="left:944px;top:409px" width="13" height="13"><polyline points="3,6 5.5,8.5 10,3.5" fill="none" stroke="#000" stroke-width="2"/></svg><div class="a" style="right:10px;top:407px;font-size:16.5px;color:#0c0c60;line-height:17px;letter-spacing:0.6px;margin-right:-0.6px;-webkit-text-stroke:0.3px #0c0c60">700</div>
<div class="a" style="left:854px;top:432px;width:168px;height:118px;border:1px solid #d0d0bf;border-radius:2px;box-shadow:inset 1px 1px 0 #fff, 1px 1px 0 #fff"></div><div class="a" style="left:861px;top:426px;padding:0 1px;background:#ece9d8;font-size:11px;font-weight:normal;color:#000;line-height:14px">ГАЗ действует</div>
<svg width="1024" height="600" style="position:absolute;left:0;top:0">
<rect x="867.3" y="443" width="3" height="1.5" fill="#303030"/>
<rect x="867.8" y="444" width="1.2" height="4" fill="#606060"/>
<polygon points="861.3,450 865.3,446.5 867.3,447 867.3,450 864.3,451" fill="#252525"/>
<rect x="864.8" y="447.5" width="9" height="2.5" fill="#8a7a8a"/>
<rect x="864.8" y="450" width="9" height="8" fill="#10a010"/>
<rect x="866.8" y="458" width="5" height="3.5" fill="#c0a8b8"/>
<rect x="866.8" y="462.5" width="5" height="1" fill="#90d090"/>
<rect x="887.25" y="443" width="3" height="1.5" fill="#303030"/>
<rect x="887.75" y="444" width="1.2" height="4" fill="#606060"/>
<polygon points="881.25,450 885.25,446.5 887.25,447 887.25,450 884.25,451" fill="#252525"/>
<rect x="884.75" y="447.5" width="9" height="2.5" fill="#8a7a8a"/>
<rect x="884.75" y="450" width="9" height="8" fill="#10a010"/>
<rect x="886.75" y="458" width="5" height="3.5" fill="#c0a8b8"/>
<rect x="886.75" y="462.5" width="5" height="1" fill="#90d090"/>
<rect x="907.1999999999999" y="443" width="3" height="1.5" fill="#303030"/>
<rect x="907.6999999999999" y="444" width="1.2" height="4" fill="#606060"/>
<polygon points="901.1999999999999,450 905.1999999999999,446.5 907.1999999999999,447 907.1999999999999,450 904.1999999999999,451" fill="#252525"/>
<rect x="904.6999999999999" y="447.5" width="9" height="2.5" fill="#8a7a8a"/>
<rect x="904.6999999999999" y="450" width="9" height="8" fill="#10a010"/>
<rect x="906.6999999999999" y="458" width="5" height="3.5" fill="#c0a8b8"/>
<rect x="906.6999999999999" y="462.5" width="5" height="1" fill="#90d090"/>
<rect x="927.15" y="443" width="3" height="1.5" fill="#303030"/>
<rect x="927.65" y="444" width="1.2" height="4" fill="#606060"/>
<polygon points="921.15,450 925.15,446.5 927.15,447 927.15,450 924.15,451" fill="#252525"/>
<rect x="924.65" y="447.5" width="9" height="2.5" fill="#8a7a8a"/>
<rect x="924.65" y="450" width="9" height="8" fill="#10a010"/>
<rect x="926.65" y="458" width="5" height="3.5" fill="#c0a8b8"/>
<rect x="926.65" y="462.5" width="5" height="1" fill="#90d090"/>
<rect x="947.0999999999999" y="443" width="3" height="1.5" fill="#303030"/>
<rect x="947.5999999999999" y="444" width="1.2" height="4" fill="#606060"/>
<polygon points="941.0999999999999,450 945.0999999999999,446.5 947.0999999999999,447 947.0999999999999,450 944.0999999999999,451" fill="#252525"/>
<rect x="944.5999999999999" y="447.5" width="9" height="2.5" fill="#8a7a8a"/>
<rect x="944.5999999999999" y="450" width="9" height="8" fill="#10a010"/>
<rect x="946.5999999999999" y="458" width="5" height="3.5" fill="#c0a8b8"/>
<rect x="946.5999999999999" y="462.5" width="5" height="1" fill="#90d090"/>
<rect x="967.05" y="443" width="3" height="1.5" fill="#303030"/>
<rect x="967.55" y="444" width="1.2" height="4" fill="#606060"/>
<polygon points="961.05,450 965.05,446.5 967.05,447 967.05,450 964.05,451" fill="#252525"/>
<rect x="964.55" y="447.5" width="9" height="2.5" fill="#8a7a8a"/>
<rect x="964.55" y="450" width="9" height="8" fill="#10a010"/>
<rect x="966.55" y="458" width="5" height="3.5" fill="#c0a8b8"/>
<rect x="966.55" y="462.5" width="5" height="1" fill="#90d090"/>
<rect x="987.0" y="443" width="3" height="1.5" fill="#303030"/>
<rect x="987.5" y="444" width="1.2" height="4" fill="#606060"/>
<polygon points="981.0,450 985.0,446.5 987.0,447 987.0,450 984.0,451" fill="#252525"/>
<rect x="984.5" y="447.5" width="9" height="2.5" fill="#8a7a8a"/>
<rect x="984.5" y="450" width="9" height="8" fill="#10a010"/>
<rect x="986.5" y="458" width="5" height="3.5" fill="#c0a8b8"/>
<rect x="986.5" y="462.5" width="5" height="1" fill="#90d090"/>
<rect x="1006.9499999999999" y="443" width="3" height="1.5" fill="#303030"/>
<rect x="1007.4499999999999" y="444" width="1.2" height="4" fill="#606060"/>
<polygon points="1000.9499999999999,450 1004.9499999999999,446.5 1006.9499999999999,447 1006.9499999999999,450 1003.9499999999999,451" fill="#252525"/>
<rect x="1004.4499999999999" y="447.5" width="9" height="2.5" fill="#8a7a8a"/>
<rect x="1004.4499999999999" y="450" width="9" height="8" fill="#10a010"/>
<rect x="1006.4499999999999" y="458" width="5" height="3.5" fill="#c0a8b8"/>
<rect x="1006.4499999999999" y="462.5" width="5" height="1" fill="#90d090"/>
<rect x="889.5" y="466.5" width="93" height="83" fill="#fff" stroke="#c0c0b0"/>
<rect x="891" y="468" width="90" height="80" fill="#000"/>
<polygon points="899.2,522.3 911.6,508.9 911.6,517.5 899.2,531.9" fill="#e03030" stroke="#fff" stroke-width="0.6"/>
<polygon points="915.5,504.1 927,496.4 927,507 915.5,513.7" fill="none" stroke="#c8c8c8" stroke-width="1" stroke-linejoin="round"/>
<polygon points="930.2,493.5 941.7,488.7 941.7,499.3 930.2,503.1" fill="none" stroke="#c8c8c8" stroke-width="1" stroke-linejoin="round"/>
<polygon points="944.8,485.9 956.3,482 956.3,492.6 944.8,496.4" fill="none" stroke="#c8c8c8" stroke-width="1" stroke-linejoin="round"/>
<polygon points="959,481 970.5,479.2 970.5,488.7 959,490.7" fill="none" stroke="#c8c8c8" stroke-width="1" stroke-linejoin="round"/>
<circle cx="928.9" cy="521.7" r="5.5" fill="#10a010" stroke="#fff" stroke-width="0.8" stroke-dasharray="2,1"/>
<circle cx="955.7" cy="520.9" r="15.3" fill="none" stroke="#fff" stroke-width="1"/>
<text x="955.7" y="525" text-anchor="middle" font-size="11" fill="#fff" font-family="Liberation Sans">B/G</text>
</svg>
<div class="a" style="left:862px;top:554px;width:161px;height:15px;background:#058005;color:#e0ffe0;font-size:13px;text-align:center;line-height:15px">ГАЗ</div>
<div class="a" style="left:0;top:549px;width:852px;height:1px;background:#8a8878"></div>
<div class="a" style="left:0;top:552px;width:98px;height:18px;border-top:1px solid #aca899;border-left:1px solid #aca899;border-right:1px solid #fff;font-size:11.5px;color:#111;text-align:center;line-height:16px">Подлючите</div>
<div class="a" style="left:102px;top:552px;width:198px;height:18px;border-top:1px solid #aca899;border-left:1px solid #aca899;border-right:1px solid #fff;font-size:11px;color:#111;line-height:16px;padding-left:8px">Верс. 1.9.23&nbsp;&nbsp;&nbsp;16.10.2006&nbsp;&nbsp;&nbsp;12:59:44</div>
<div class="a" style="left:302px;top:552px;width:550px;height:18px;border-top:1px solid #aca899;border-left:1px solid #aca899;"></div>
<div class="a" style="left:0;top:569px;width:1024px;height:1px;background:#fff"></div>
<div class="a" style="left:0;top:570px;width:1024px;height:30px;background:linear-gradient(#1a3a90 0px,#1a3a90 1px,#3c80e8 2px,#4a8ef0 4px,#3a7ae6 5px,#2058d8 6px,#2158d5 15px,#2360da 26px,#2260d8 28px,#1941a5 30px)"></div>
<div class="a" style="left:0;top:570px;width:94px;height:30px;border-radius:0 12px 12px 0;background:linear-gradient(#3c9b3c 0%,#47ad47 15%,#36983a 55%,#2e8a30 90%,#2a7a2a 100%);box-shadow:inset -3px 0 4px rgba(0,60,0,0.5)"></div>
<svg width="30" height="30" style="position:absolute;left:8px;top:573px"><path d="M4,6 Q8,4 12,6 L11,13 Q7,11 3,13 Z" fill="#e85020"/><path d="M13,6 Q17,8 21,6 L20,13 Q16,15 12,13 Z" fill="#70c030"/><path d="M3,14 Q7,12 11,14 L10,21 Q6,19 2,21 Z" fill="#3080e8"/><path d="M12,14 Q16,16 20,14 L19,21 Q15,23 11,21 Z" fill="#f0c020"/></svg>
<div class="a" style="left:35px;top:574px;font-size:17.5px;font-weight:bold;font-style:italic;color:#fff;text-shadow:1px 1px 1px #1a4a1a">пуск</div>
<div class="a" style="left:106px;top:574px;width:157px;height:23px;border-radius:3px;background:#3c81f3;box-shadow:inset 1px 1px 0 #6aa0f8, inset -1px -1px 0 #2a5fc8"></div>
<div class="a" style="left:116px;top:577px;width:13px;height:15px;border-radius:50%;border:3px solid #d01010;background:#fff;"></div>
<div class="a" style="left:135px;top:578px;font-size:10.5px;color:#fff">AS8 - КЛУБ ЛЮБИТЕ...</div>
<div class="a" style="left:266px;top:574px;width:158px;height:23px;border-radius:3px;background:#1e4fc0;box-shadow:inset 1px 1px 0 #103a98"></div>
<svg class="a" style="left:273px;top:575px" width="22" height="20"><path d="M4.2,5.8 H7.2 Q9.8,6.2 9.8,10.2 Q9.8,14.2 7.2,14.6 H4.2 Z" fill="none" stroke="#0a0a4a" stroke-width="1.7"/><path d="M11.3,8.5 V15" stroke="#0a0a4a" stroke-width="1.6"/><path d="M10.5,8.8 H18" stroke="#0a0a4a" stroke-width="2.2"/></svg>
<div class="a" style="left:296px;top:578px;font-size:10.5px;color:#fff">DIGITRONIC – EASY ...</div>
<div class="a" style="left:877px;top:570px;width:147px;height:30px;background:linear-gradient(#1597ec 0%,#0f8be6 50%,#0c80d8 100%);border-left:1px solid #0a60b0"></div>
<div class="a" style="left:869px;top:577px;width:18px;height:18px;border-radius:50%;background:radial-gradient(circle at 40% 35%,#9cc8ff,#3a78e0 70%);border:1px solid #c0dcff;color:#fff;font-size:12px;font-weight:bold;line-height:16px;text-align:center">‹</div>
<svg width="100" height="30" style="position:absolute;left:887px;top:570px"><rect x="2" y="8" width="10" height="8" fill="#4060a0" stroke="#c0c0c0"/><rect x="3" y="17" width="9" height="3" fill="#ddd"/><path d="M9,17 L15,24 M15,17 L9,24" stroke="#e01010" stroke-width="2"/><path d="M14,6 Q17,11 14,16 M16,4 Q20,11 16,18" stroke="#e0e0ff" fill="none"/><rect x="26" y="6" width="9" height="8" fill="#40c0f0" stroke="#fff"/><circle cx="24" cy="19" r="3.5" fill="none" stroke="#40d040" stroke-width="2"/><rect x="28" y="15" width="8" height="5" fill="#fff"/><circle cx="46" cy="13" r="7" fill="#6a6a6a" stroke="#c0c0c0"/><circle cx="46" cy="13" r="3" fill="#303030"/><rect x="62" y="5" width="7" height="19" rx="2" fill="#f0f0f0" stroke="#203060"/><rect x="63" y="19" width="5" height="5" fill="#203070"/><rect x="73" y="4" width="15" height="14" fill="#909090" stroke="#1a3a80"/><rect x="73" y="20" width="6" height="4" fill="#1a3a80"/><rect x="81" y="20" width="7" height="4" fill="#1a3a80"/></svg>
<div class="a" style="left:983px;top:578px;font-size:11.5px;color:#fff">20:31</div>
</body></html>
